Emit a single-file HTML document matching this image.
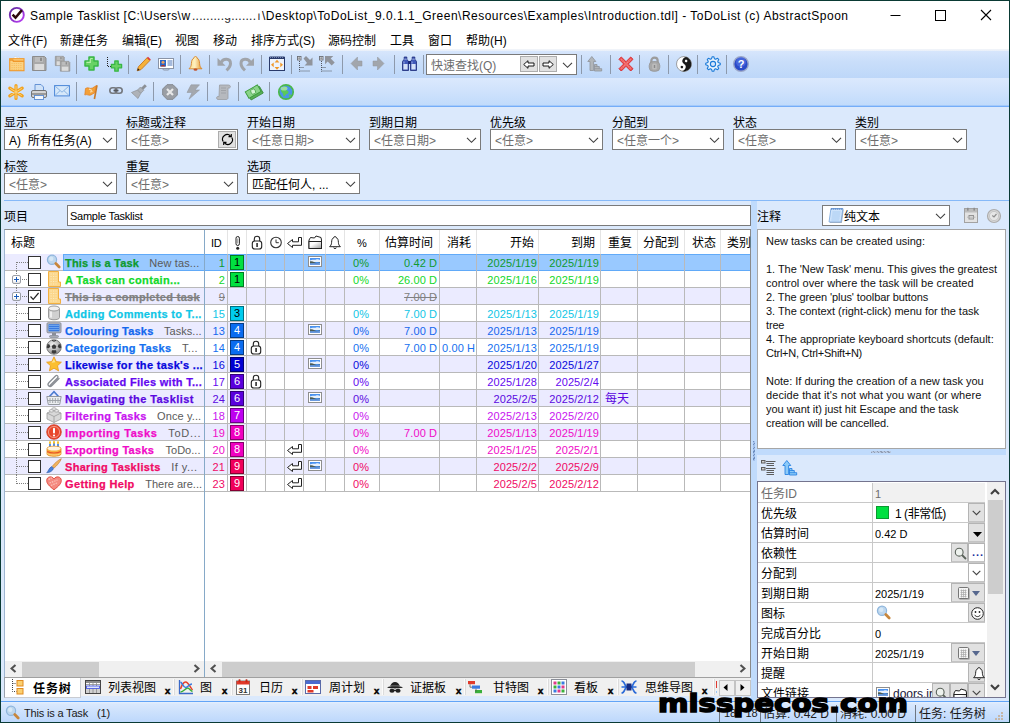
<!DOCTYPE html><html><head><meta charset="utf-8"><title>ToDoList</title><style>
*{box-sizing:border-box;margin:0;padding:0}
html,body{width:1010px;height:723px;overflow:hidden}
body{position:relative;background:#dbe9fc;font:12px "Liberation Sans","Noto Sans CJK SC",sans-serif;color:#000}
.a{position:absolute;white-space:nowrap}
.t{position:absolute;white-space:nowrap;line-height:14px;height:14px}
.cj{font-family:"Liberation Sans","Noto Sans CJK SC",sans-serif;font-size:12px}
.combo{position:absolute;height:21px;border:1px solid #7a7a7a;background:#fff;font-size:12px;line-height:20px;padding-left:4px;padding-top:1px;color:#6d6d6d;white-space:nowrap;overflow:hidden}
.chev{position:absolute;right:3px;top:7px}
.lbl{position:absolute;font-size:12px;line-height:14px;white-space:nowrap}
.sep{position:absolute;width:1px;height:19px;background:#8d99ab}
.ic{position:absolute;width:16px;height:16px}
.row{position:absolute;left:5px;width:745px;height:17px}
.gl{position:absolute;background:#b9b9b9}
.c{position:absolute;top:1px;letter-spacing:.08px;font-size:11px;line-height:17px;height:17px;white-space:nowrap}
.tt{position:absolute;left:60px;top:1px;font:bold 11px/17px "Liberation Sans",sans-serif;white-space:nowrap;letter-spacing:.22px;-webkit-text-stroke:.25px currentColor}
.cm{font-weight:normal;color:#5a5a5a;letter-spacing:0;-webkit-text-stroke:0 transparent}
.cb{position:absolute;left:23px;top:2px;width:13px;height:13px;border:1px solid #333;background:#fff}
.pb{position:absolute;left:225px;top:1px;width:14px;height:15px;border:1px solid #000;font:11px/13px "Liberation Sans",sans-serif;text-align:center}
.dot-h{position:absolute;height:1px;background-image:linear-gradient(to right,#808080 50%,transparent 50%);background-size:2px 1px}
.dot-v{position:absolute;width:1px;background-image:linear-gradient(to bottom,#808080 50%,transparent 50%);background-size:1px 2px}
.hd{position:absolute;top:1px;height:23px;line-height:24px;font-size:12px;white-space:nowrap}
.ar{position:absolute;left:758px;width:227px;height:20px;border-bottom:1px solid #c8c8c8;background:#fff}
.ar .k{position:absolute;left:3px;top:2px;line-height:19px;font-size:12px}
.ar .v{position:absolute;left:117px;top:2px;line-height:19px;font-size:11px}
.ar .vl{position:absolute;left:114px;top:0;width:1px;height:20px;background:#c8c8c8}
.btn{position:absolute;top:0;height:19px;background:#e1e1e1;border:1px solid #b4b4b4;border-bottom-color:#c4c4c4}
.tab{position:absolute;top:679px;height:20px;line-height:19px;font-size:12px;white-space:nowrap}
.x{position:absolute;top:681px;font:bold 9.5px/19px "Liberation Sans",sans-serif;-webkit-text-stroke:.5px #000}
.sb{position:absolute;font-size:11px;line-height:14px;white-space:nowrap;color:#1a1a1a}
</style></head><body>
<div class="a" style="left:0;top:0;width:1010px;height:31px;background:#fff"></div>
<div class="a" style="left:0;top:31px;width:1010px;height:19px;background:#fff"></div>
<div class="a" style="left:8px;top:6px;width:18px;height:18px"><svg width="18" height="18" viewBox="0 0 18 18" style="display:block;overflow:visible"><defs><linearGradient id="apg" x1="0" y1="0" x2="1" y2="1"><stop offset="0" stop-color="#5a2a98"/><stop offset=".5" stop-color="#8a30c8"/><stop offset="1" stop-color="#c040f8"/></linearGradient></defs><circle cx="8.8" cy="8.9" r="7" fill="#fff" stroke="url(#apg)" stroke-width="1.9"/><path d="M4.6 8.700l2.900 3 6.400-7.600" stroke="#2a0a0a" stroke-width="2.500" fill="none"/></svg></div>
<div class="a" style="left:30px;top:8px;font-size:12px;line-height:16px;letter-spacing:0.445px">Sample Tasklist [C:\Users\w</div>
<div class="a" style="left:192px;top:8px;font-size:12px;line-height:16px;letter-spacing:.25px;color:#222">.........<span style="display:inline-block;clip-path:inset(62% 0 0 0);color:#333">g</span>.......<span style="display:inline-block;clip-path:inset(35% 0 0 0);color:#333;margin-left:1px">ı</span></div>
<div class="a" style="left:262px;top:8px;font-size:12px;line-height:16px;letter-spacing:0.493px">\Desktop\ToDoList_9.0.1.1_Green\Resources\Examples\Introduction.tdl] - ToDoList (c) AbstractSpoon</div>
<svg class="a" style="left:880px;top:0" width="130" height="31" viewBox="0 0 130 31"><path d="M10.5 15.5h10" stroke="#000" stroke-width="1" fill="none"/><rect x="55.5" y="10.5" width="10" height="10" stroke="#000" fill="none"/><path d="M101 10l10 10M111 10l-10 10" stroke="#000" stroke-width="1.1" fill="none"/></svg>
<div class="t cj" style="left:8px;top:34px">文件(F)</div>
<div class="t cj" style="left:60px;top:34px">新建任务</div>
<div class="t cj" style="left:122px;top:34px">编辑(E)</div>
<div class="t cj" style="left:175px;top:34px">视图</div>
<div class="t cj" style="left:213px;top:34px">移动</div>
<div class="t cj" style="left:251px;top:34px">排序方式(S)</div>
<div class="t cj" style="left:328px;top:34px">源码控制</div>
<div class="t cj" style="left:390px;top:34px">工具</div>
<div class="t cj" style="left:428px;top:34px">窗口</div>
<div class="t cj" style="left:466px;top:34px">帮助(H)</div>
<div class="a" style="left:0;top:49px;width:1010px;height:2px;background:linear-gradient(#f3f5f9,#e8effa)"></div>
<div class="a" style="left:0;top:51px;width:1010px;height:27px;background:linear-gradient(#d7e6fc,#c9defa 40%,#bdd7f9)"></div>
<div class="a" style="left:0;top:78px;width:1010px;height:27px;background:linear-gradient(#dbe9fd,#cfe2fc 50%,#c1dbfb)"></div>
<div class="a" style="left:0;top:105px;width:1010px;height:1px;background:#a4cafb"></div><div class="a" style="left:0;top:106px;width:1010px;height:1px;background:#74adf8"></div>
<div class="ic" style="left:9px;top:56px"><svg width="16" height="16" viewBox="0 0 16 16" style="display:block;overflow:visible"><path d="M3.800 5.500L5.500.3l2.800 1.200L10 1l2.500 3.500v1z" fill="#fff" stroke="#c4ccd6" stroke-width=".6"/><rect x=".7" y="2.700" width="14.300" height="12" fill="#fbd283" stroke="#f0982a" stroke-width="1.100"/><path d="M.7 4h3l.8 1.300h10.500" stroke="#f0982a" stroke-width="1.600" fill="none"/><path d="M2.500 7.500h11M2.500 9.500h11M2.500 11.500h11M2.500 13.300h11" stroke="#f6bc5a" stroke-width=".9" stroke-dasharray="1.200 1"/></svg></div>
<div class="ic" style="left:32px;top:56px"><svg width="16" height="16" viewBox="0 0 16 16" style="display:block;overflow:visible"><g transform="translate(0,0) scale(1.0)"><path d="M.5.5h12l1.5 1.5v12.5H.5z" fill="#a9a9a9" stroke="#8c8c8c"/><rect x="3" y="1" width="8" height="5" fill="#bcbcbc"/><rect x="8" y="1.7" width="2" height="3.3" fill="#8c8c8c"/><rect x="2.5" y="8" width="9.5" height="6" fill="#dcdcdc"/></g></svg></div>
<div class="ic" style="left:55px;top:56px"><svg width="16" height="16" viewBox="0 0 16 16" style="display:block;overflow:visible"><g transform="translate(0,0) scale(0.66)"><path d="M.5.5h12l1.5 1.5v12.5H.5z" fill="#a9a9a9" stroke="#8c8c8c"/><rect x="3" y="1" width="8" height="5" fill="#bcbcbc"/><rect x="8" y="1.7" width="2" height="3.3" fill="#8c8c8c"/><rect x="2.5" y="8" width="9.5" height="6" fill="#dcdcdc"/></g><g transform="translate(5,5) scale(0.7)"><path d="M.5.5h12l1.5 1.5v12.5H.5z" fill="#a9a9a9" stroke="#8c8c8c"/><rect x="3" y="1" width="8" height="5" fill="#bcbcbc"/><rect x="8" y="1.7" width="2" height="3.3" fill="#8c8c8c"/><rect x="2.5" y="8" width="9.5" height="6" fill="#dcdcdc"/></g></svg></div>
<div class="sep" style="left:76px;top:55px"></div>
<div class="ic" style="left:84px;top:56px"><svg width="15" height="15" viewBox="0 0 15 15" style="display:block;overflow:visible"><path d="M5 1h5v4h4v5h-4v4H5v-4H1V5h4z" fill="#68d264" stroke="#38b646" stroke-width="1.500" stroke-linejoin="round"/><path d="M6.300 2.500h2.400M2.500 6.300h3.800V3" stroke="#b4f0a8" stroke-width="1.200" fill="none"/></svg></div>
<div class="ic" style="left:106px;top:56px"><svg width="16" height="16" viewBox="0 0 16 16" style="display:block;overflow:visible"><path d="M1.500 1v9.500h3.500" stroke="#222" stroke-width="1" stroke-dasharray="1 1" fill="none"/><path d="M8.800 5h3.400v3.400h3.400v3.400h-3.400v3.400H8.800v-3.400H5.400V8.400h3.400z" fill="#68d264" stroke="#38b646" stroke-width="1.300" stroke-linejoin="round"/></svg></div>
<div class="sep" style="left:128px;top:55px"></div>
<div class="ic" style="left:136px;top:56px"><svg width="16" height="16" viewBox="0 0 16 16" style="display:block;overflow:visible"><path d="M1.2 14.8l1.2-4L11 1.8l2.8 2.8-8.8 9z" fill="#f5b13a" stroke="#c8761a" stroke-width=".9"/><path d="M11 1.8l1-1 2.8 2.8-1 1z" fill="#e0303a"/><path d="M1.2 14.8l.7-2.5 1.8 1.8z" fill="#222"/></svg></div>
<div class="ic" style="left:158px;top:56px"><svg width="16" height="16" viewBox="0 0 16 16" style="display:block;overflow:visible"><rect x=".5" y="2.5" width="15" height="10" fill="#fff" stroke="#8a94a6"/><rect x="2" y="4" width="6" height="6.5" fill="#2a66c8"/><circle cx="5" cy="6.3" r="1.5" fill="#e8a060"/><path d="M2.6 10.5c.4-2 4.4-2 4.8 0z" fill="#b03020"/><path d="M9.5 5h5M9.5 7h5M9.5 9h5" stroke="#4a74b8" stroke-width="1"/><path d="M.5 12.5h4l1 1.5h5l1-1.5h4" stroke="#8a94a6" fill="none"/></svg></div>
<div class="sep" style="left:180px;top:55px"></div>
<div class="ic" style="left:188px;top:56px"><svg width="15" height="15" viewBox="0 0 15 15" style="display:block;overflow:visible"><defs><linearGradient id="blg" x1="0" y1="0" x2="1" y2="0"><stop offset="0" stop-color="#fbe08a"/><stop offset=".45" stop-color="#fdf0c0"/><stop offset="1" stop-color="#e8982a"/></linearGradient></defs><path d="M7.500.5c1 0 1.500.7 1.400 1.500 2 .9 2.600 2.900 2.700 5.500.1 2.600.9 3.800 2.400 5.300H1c1.500-1.500 2.300-2.700 2.400-5.300C3.500 4.900 4.100 2.900 6.100 2 6 1.200 6.500.5 7.500.5z" fill="url(#blg)" stroke="#d8862a" stroke-width=".9"/><ellipse cx="7.500" cy="13.600" rx="2" ry="1.200" fill="#c0502a"/></svg></div>
<div class="sep" style="left:209px;top:55px"></div>
<div class="ic" style="left:217px;top:56px"><svg width="16" height="16" viewBox="0 0 16 16" style="display:block;overflow:visible"><path d="M.5 2v7.800h8z" fill="#a0a4aa"/><path d="M4.300 6.300C6 2.300 13.500 2 13.500 7.500c0 2.800-1.800 4.800-4 6.800" stroke="#a0a4aa" stroke-width="3" fill="none"/></svg></div>
<div class="ic" style="left:239px;top:56px"><svg width="16" height="16" viewBox="0 0 16 16" style="display:block;overflow:visible"><g transform="translate(15.500,0) scale(-1,1)"><path d="M.5 2v7.800h8z" fill="#a0a4aa"/><path d="M4.300 6.300C6 2.300 13.500 2 13.500 7.500c0 2.800-1.800 4.800-4 6.800" stroke="#a0a4aa" stroke-width="3" fill="none"/></g></svg></div>
<div class="sep" style="left:261px;top:55px"></div>
<div class="ic" style="left:269px;top:56px"><svg width="16" height="16" viewBox="0 0 16 16" style="display:block;overflow:visible"><rect x=".5" y="1.500" width="15" height="13" fill="#eef4fc" stroke="#2a3a6a"/><rect x=".5" y=".5" width="15" height="2.500" fill="#2a3a6a"/><path d="M1 1.500h14" stroke="#8a9ac8" stroke-width=".8" stroke-dasharray="1 1"/><path d="M8 3.800l2.400 2.700H5.600zM8 13.700l2.400-2.700H5.600zM2 8.800l2.700-2.400v4.800zM14 8.800l-2.700-2.400v4.800z" fill="#f09828"/></svg></div>
<div class="sep" style="left:291px;top:55px"></div>
<div class="ic" style="left:297px;top:56px"><svg width="16" height="16" viewBox="0 0 16 16" style="display:block;overflow:visible"><rect x=".5" y=".5" width="3.500" height="3.500" fill="#fff" stroke="#6a6e76" stroke-width=".9"/><path d="M2.200 1v2.500M1 2.200h2.500" stroke="#6a6e76" stroke-width=".7"/><path d="M2.500 5v10.500M2.500 11.500h4.500M2.500 15h10.500" stroke="#50545c" stroke-width="1" stroke-dasharray="1 1" fill="none"/><path d="M6.500 2.500l2.500-2.500 4 4 2.500-2.500v8h-8l2.500-2.500z" fill="#90949c"/></svg></div>
<div class="ic" style="left:319px;top:56px"><svg width="16" height="16" viewBox="0 0 16 16" style="display:block;overflow:visible"><rect x=".5" y=".5" width="3.500" height="3.500" fill="#fff" stroke="#6a6e76" stroke-width=".9"/><path d="M2.200 1v2.500M1 2.200h2.500" stroke="#6a6e76" stroke-width=".7"/><path d="M2.500 5v10.500M2.500 11.500h4.500M2.500 15h10.500" stroke="#50545c" stroke-width="1" stroke-dasharray="1 1" fill="none"/><path d="M6 0h8.300l-2.600 2.600 4 4-3 3-4-4L6 8.300z" fill="#90949c"/></svg></div>
<div class="sep" style="left:342px;top:55px"></div>
<div class="ic" style="left:349px;top:56px"><svg width="16" height="16" viewBox="0 0 16 16" style="display:block;overflow:visible"><path d="M2 7.500l6.500-6.500v4h4.500v5H8.500v4z" fill="#a2a6ac" stroke="#92969c" stroke-width=".5"/></svg></div>
<div class="ic" style="left:371px;top:56px"><svg width="16" height="16" viewBox="0 0 16 16" style="display:block;overflow:visible"><g transform="translate(15,0) scale(-1,1)"><path d="M2 7.500l6.500-6.500v4h4.500v5H8.500v4z" fill="#a2a6ac" stroke="#92969c" stroke-width=".5"/></g></svg></div>
<div class="sep" style="left:394px;top:55px"></div>
<div class="ic" style="left:402px;top:56px"><svg width="15" height="15" viewBox="0 0 15 15" style="display:block;overflow:visible"><path d="M2.200 1h2.600v2.200l1.700 2.300v9H.5v-9l1.700-2.300z" fill="#4058b8" stroke="#1a2878" stroke-width=".8"/><rect x="1.400" y="8" width="4.200" height="5.500" fill="#d4e0f6"/><path d="M2.200 3.200h2.600" stroke="#a8b8e8" stroke-width=".9"/><path d="M2 5.500v2" stroke="#a8b8e8" stroke-width=".9"/><g transform="translate(8,0)"><path d="M2.200 1h2.600v2.200l1.700 2.300v9H.5v-9l1.700-2.300z" fill="#4058b8" stroke="#1a2878" stroke-width=".8"/><rect x="1.400" y="8" width="4.200" height="5.500" fill="#d4e0f6"/><path d="M2.200 3.200h2.600" stroke="#a8b8e8" stroke-width=".9"/><path d="M2 5.500v2" stroke="#a8b8e8" stroke-width=".9"/></g><rect x="6" y="5" width="3" height="3" fill="#1a2878"/></svg></div>
<div class="sep" style="left:423px;top:55px"></div>
<div class="sep" style="left:581px;top:55px"></div>
<div class="ic" style="left:587px;top:56px"><svg width="16" height="16" viewBox="0 0 16 16" style="display:block;overflow:visible"><path d="M4.800.5L.8 5.500h2.200v9h3.600v-9h2.200z" fill="#b2b6ba" stroke="#8e9298" stroke-width=".8" stroke-linejoin="round"/><path d="M7.500 8.500h2.500v2h2.300v2.200h2.400v2.300H7.500z" fill="#b2b6ba" stroke="#8e9298" stroke-width=".8"/><path d="M7.500 10.500h2.500M7.500 12.700h4.800" stroke="#8e9298" stroke-width=".7"/></svg></div>
<div class="sep" style="left:610px;top:55px"></div>
<div class="ic" style="left:618px;top:56px"><svg width="16" height="16" viewBox="0 0 16 16" style="display:block;overflow:visible"><path d="M1 3.300L3.300 1 8 5.700 12.700 1 15 3.300 10.300 8l4.700 4.700-2.300 2.300L8 10.300 3.300 15 1 12.700 5.700 8z" fill="#ee5a5a" stroke="#d82a30" stroke-width="1" stroke-linejoin="round"/><path d="M3.300 3.300l9.400 9.400M12.700 3.300l-9.400 9.400" stroke="#f48a8a" stroke-width="1.200" stroke-dasharray="1 1"/></svg></div>
<div class="sep" style="left:639px;top:55px"></div>
<div class="ic" style="left:647px;top:56px"><svg width="15" height="16" viewBox="0 0 15 16" style="display:block;overflow:visible"><path d="M4.300 7V5c0-4.500 6.400-4.500 6.400 0v2" stroke="#9c9c9c" stroke-width="2.200" fill="none"/><rect x="2.200" y="5.500" width="10.600" height="9.800" rx="4" fill="#a8a8a8" stroke="#949494" stroke-width=".8"/><rect x="5.200" y="7.500" width="4.600" height="6" rx="1.500" fill="#bcbcbc"/><path d="M7.500 9v3" stroke="#8a8a8a" stroke-width="1.400"/></svg></div>
<div class="sep" style="left:668px;top:55px"></div>
<div class="ic" style="left:676px;top:56px"><svg width="16" height="16" viewBox="0 0 16 16" style="display:block;overflow:visible"><circle cx="8" cy="8" r="7.500" fill="#fff" stroke="#8a8a8a" stroke-width=".8"/><g transform="rotate(35 8 8) translate(0,16) scale(1,-1)"><path d="M8 .6a7.400 7.400 0 0 1 0 14.800a3.700 3.700 0 0 1 0-7.400a3.700 3.700 0 0 0 0-7.400z" fill="#1a1a1a"/><circle cx="8" cy="4.300" r="1.300" fill="#1a1a1a"/><circle cx="8" cy="11.700" r="1.300" fill="#fff"/></g></svg></div>
<div class="sep" style="left:697px;top:55px"></div>
<div class="ic" style="left:705px;top:56px"><svg width="16" height="16" viewBox="0 0 16 16" style="display:block;overflow:visible"><path d="M15.26 7.20 L15.26 8.80 L13.19 9.51 L12.73 10.60 L13.70 12.56 L12.56 13.70 L10.60 12.73 L9.51 13.19 L8.80 15.26 L7.20 15.26 L6.49 13.19 L5.40 12.73 L3.44 13.70 L2.30 12.56 L3.27 10.60 L2.81 9.51 L0.74 8.80 L0.74 7.20 L2.81 6.49 L3.27 5.40 L2.30 3.44 L3.44 2.30 L5.40 3.27 L6.49 2.81 L7.20 0.74 L8.80 0.74 L9.51 2.81 L10.60 3.27 L12.56 2.30 L13.70 3.44 L12.73 5.40 L13.19 6.49z" fill="#e8f2fc" stroke="#1a7ad8" stroke-width="1.100" stroke-linejoin="round"/><circle cx="8" cy="8" r="2.600" fill="#d6e6fb" stroke="#1a7ad8" stroke-width="1.100"/></svg></div>
<div class="sep" style="left:726px;top:55px"></div>
<div class="ic" style="left:733px;top:56px"><svg width="16" height="16" viewBox="0 0 16 16" style="display:block;overflow:visible"><circle cx="8" cy="8" r="7.300" fill="#2a4ac8" stroke="#9aa6c8" stroke-width="1.400"/><circle cx="8" cy="6" r="5" fill="#5a7ae8" opacity=".6"/><text x="8" y="12" text-anchor="middle" font-family="Liberation Sans,sans-serif" font-weight="bold" font-size="11" fill="#fff">?</text></svg></div>
<div class="ic" style="left:8px;top:84px"><svg width="16" height="16" viewBox="0 0 16 16" style="display:block;overflow:visible"><g stroke="#f2a21e" stroke-width="3.200" stroke-linecap="round"><path d="M8 1.600v12.800M1.800 4.200l12.400 7.600M14.200 4.200L1.800 11.800"/></g><g stroke="#fbd27a" stroke-width="1" stroke-linecap="round"><path d="M8 2v12M2.500 4.600l11 6.800M13.500 4.600l-11 6.800"/></g></svg></div>
<div class="ic" style="left:31px;top:84px"><svg width="16" height="16" viewBox="0 0 16 16" style="display:block;overflow:visible"><path d="M4 7V.5h6l2.500 2.500V7z" fill="#cfe2f8" stroke="#5a8ad0" stroke-width=".9"/><rect x=".5" y="6.500" width="15" height="7" rx="1.500" fill="#d4d4d4" stroke="#6a6a6a" stroke-width=".9"/><rect x="1" y="9" width="14" height="2" fill="#9a9a9a"/><rect x="3.500" y="11.500" width="9" height="4" fill="#f4f8fc" stroke="#5a8ad0" stroke-width=".9"/></svg></div>
<div class="ic" style="left:54px;top:84px"><svg width="16" height="16" viewBox="0 0 16 16" style="display:block;overflow:visible"><rect x=".6" y="1.600" width="14.800" height="10.300" fill="#d6e8fa" stroke="#4a86d8" stroke-width="1"/><path d="M1.200 2.200L8 8.200l6.800-6M1.200 11.300l4.800-4.600M14.800 11.300l-4.800-4.600" stroke="#8ab4e4" stroke-width="1" fill="none"/></svg></div>
<div class="sep" style="left:76px;top:82px"></div>
<div class="ic" style="left:84px;top:84px"><svg width="16" height="16" viewBox="0 0 16 16" style="display:block;overflow:visible"><path d="M12.200 1l1.600.4-2.600 13.800-1.600-.4z" fill="#c87a2a"/><path d="M1.500 4.500c2.500-2 4.500 1 7-.5 1.500-.9 2.500-1.800 3.700-2.200l-1.400 7c-1.500.5-2.300 1.500-4 2.200-2.300.9-3.800-1.200-6 0z" fill="#f4a038" stroke="#e07a1a" stroke-width=".7"/><path d="M5 5l3 1.500M6 8l2.500-.5" stroke="#fde0b0" stroke-width="1.200"/></svg></div>
<div class="ic" style="left:108px;top:84px"><svg width="16" height="16" viewBox="0 0 16 16" style="display:block;overflow:visible"><rect x="1.800" y="3.800" width="7" height="5.400" rx="2.700" fill="none" stroke="#74787e" stroke-width="1.600"/><rect x="7.200" y="3.800" width="7" height="5.400" rx="2.700" fill="none" stroke="#74787e" stroke-width="1.600"/><path d="M5.500 6.500h5" stroke="#54585e" stroke-width="1.600"/></svg></div>
<div class="ic" style="left:131px;top:84px"><svg width="16" height="16" viewBox="0 0 16 16" style="display:block;overflow:visible"><path d="M9.500 4.500L13.800.3l2 2-4.300 4.200z" fill="#8c9096"/><path d="M.5 8.500l6-2.500 3-3 3.300 3.300-3 3L7 14.500z" fill="#aeb2b8" stroke="#8c9096" stroke-width=".7"/><path d="M6.500 6l3.300 3.300" stroke="#8c9096" stroke-width=".8"/></svg></div>
<div class="sep" style="left:153px;top:82px"></div>
<div class="ic" style="left:162px;top:84px"><svg width="16" height="16" viewBox="0 0 16 16" style="display:block;overflow:visible"><path d="M5 .7h6L15.300 5v6L11 15.300H5L.7 11V5z" fill="#9a9ea4" stroke="#84888e"/><path d="M5 5l6 6M11 5l-6 6" stroke="#e8e8e8" stroke-width="2.200"/></svg></div>
<div class="ic" style="left:185px;top:84px"><svg width="16" height="16" viewBox="0 0 16 16" style="display:block;overflow:visible"><path d="M6 .8h8.500L10 6h4.500L4 15.200 7 8.500H2z" fill="#a4a8ae" stroke="#8e9298" stroke-width=".5"/></svg></div>
<div class="sep" style="left:207px;top:82px"></div>
<div class="ic" style="left:216px;top:84px"><svg width="16" height="16" viewBox="0 0 16 16" style="display:block;overflow:visible"><path d="M3.500 1h9c2 0 2.500 2.500 1 3h-1.500v10c0 1-1 1.500-2 1.500H2c-1.500 0-2-2.500-.5-3h1.500z" fill="#b6b9be" stroke="#9a9da2" stroke-width=".8"/><path d="M5 4h5M5 6.500h5M5 9h5" stroke="#9a9da2" stroke-width=".8"/></svg></div>
<div class="sep" style="left:238px;top:82px"></div>
<div class="ic" style="left:246px;top:84px"><svg width="16" height="16" viewBox="0 0 16 16" style="display:block;overflow:visible"><g transform="rotate(-30 8 8)"><rect x="1.500" y="6" width="14" height="7.500" fill="#58b058" stroke="#3a8a3a" stroke-width=".8"/><rect x=".5" y="3.500" width="14" height="7.500" fill="#8ad48a" stroke="#3a9a3a" stroke-width=".9"/><ellipse cx="7.500" cy="7.200" rx="2.400" ry="2.600" fill="#d4f4d4" stroke="#3a9a3a" stroke-width=".7"/></g></svg></div>
<div class="sep" style="left:269px;top:82px"></div>
<div class="ic" style="left:278px;top:84px"><svg width="16" height="16" viewBox="0 0 16 16" style="display:block;overflow:visible"><circle cx="8" cy="8" r="7.200" fill="#4a94e8" stroke="#4ab84a" stroke-width="1.700"/><path d="M4 4c1.500-1.500 4-2 5-1s-1 2-.5 3 2 .5 2 2-1.500 2-2.500 2.500S7 13 6 12.500 5.500 10 4.500 9 2.500 7 3 6s.5-1.500 1-2z" fill="#5ac85a"/><path d="M11 10.500c1-.5 2 0 2 1s-1.500 1.500-2 1 0-1.500 0-2z" fill="#5ac85a"/><ellipse cx="6" cy="4.500" rx="3.500" ry="2" fill="#fff" opacity=".4"/></svg></div>
<div class="combo" style="left:426px;top:54px;width:151px;color:#6d6d6d">快速查找(Q)<svg class="chev" width="11" height="7" viewBox="0 0 11 7"><path d="M1 .8l4.500 4.500L10 .8" stroke="#404040" stroke-width="1.150" fill="none"/></svg><span class="a" style="left:93px;top:1px;width:18px;height:16px;background:#e1e1e1;border:1px solid #adadad"></span><span class="a" style="left:112px;top:1px;width:18px;height:16px;background:#e1e1e1;border:1px solid #adadad"></span><svg class="a" style="left:96px;top:5px" width="12" height="9" viewBox="0 0 12 9"><path d="M.7 4.5L5 .7v2.3h6v3H5v2.3z" fill="#fff" stroke="#000" stroke-width=".9"/></svg><svg class="a" style="left:115px;top:5px" width="12" height="9" viewBox="0 0 12 9"><path d="M11.3 4.5L7 .7v2.3H1v3h6v2.3z" fill="#fff" stroke="#000" stroke-width=".9"/></svg></div>
<div class="lbl" style="left:4px;top:116px">显示</div>
<div class="combo" style="left:4px;top:129px;width:113px;color:#000;">A)&nbsp; 所有任务(A)<svg class="chev" width="11" height="7" viewBox="0 0 11 7"><path d="M1 .8l4.500 4.500L10 .8" stroke="#404040" stroke-width="1.150" fill="none"/></svg></div>
<div class="lbl" style="left:126px;top:116px">标题或注释</div>
<div class="combo" style="left:126px;top:129px;width:112px">&lt;任意&gt;<span class="a" style="right:1px;top:1px;width:18px;height:17px;background:#e1e1e1;border:1px solid #adadad"></span><svg class="a" style="right:3px;top:3px" width="13" height="13" viewBox="0 0 13 13"><path d="M2.2 8.5A4.6 4.6 0 0 1 9.5 3M10.8 4.5A4.6 4.6 0 0 1 3.5 10" stroke="#000" stroke-width="1.1" fill="none"/><path d="M7.5 3.6h2.8V.9M5.5 9.4H2.7v2.7" stroke="#000" stroke-width="1.1" fill="none"/></svg></div>
<div class="lbl" style="left:247px;top:116px">开始日期</div>
<div class="combo" style="left:247px;top:129px;width:113px;">&lt;任意日期&gt;<svg class="chev" width="11" height="7" viewBox="0 0 11 7"><path d="M1 .8l4.500 4.500L10 .8" stroke="#404040" stroke-width="1.150" fill="none"/></svg></div>
<div class="lbl" style="left:369px;top:116px">到期日期</div>
<div class="combo" style="left:369px;top:129px;width:112px;">&lt;任意日期&gt;<svg class="chev" width="11" height="7" viewBox="0 0 11 7"><path d="M1 .8l4.500 4.500L10 .8" stroke="#404040" stroke-width="1.150" fill="none"/></svg></div>
<div class="lbl" style="left:490px;top:116px">优先级</div>
<div class="combo" style="left:490px;top:129px;width:113px;">&lt;任意&gt;<svg class="chev" width="11" height="7" viewBox="0 0 11 7"><path d="M1 .8l4.500 4.500L10 .8" stroke="#404040" stroke-width="1.150" fill="none"/></svg></div>
<div class="lbl" style="left:612px;top:116px">分配到</div>
<div class="combo" style="left:612px;top:129px;width:112px;">&lt;任意一个&gt;<svg class="chev" width="11" height="7" viewBox="0 0 11 7"><path d="M1 .8l4.500 4.500L10 .8" stroke="#404040" stroke-width="1.150" fill="none"/></svg></div>
<div class="lbl" style="left:733px;top:116px">状态</div>
<div class="combo" style="left:733px;top:129px;width:113px;">&lt;任意&gt;<svg class="chev" width="11" height="7" viewBox="0 0 11 7"><path d="M1 .8l4.500 4.500L10 .8" stroke="#404040" stroke-width="1.150" fill="none"/></svg></div>
<div class="lbl" style="left:855px;top:116px">类别</div>
<div class="combo" style="left:855px;top:129px;width:112px;">&lt;任意&gt;<svg class="chev" width="11" height="7" viewBox="0 0 11 7"><path d="M1 .8l4.500 4.500L10 .8" stroke="#404040" stroke-width="1.150" fill="none"/></svg></div>
<div class="lbl" style="left:4px;top:160px">标签</div>
<div class="combo" style="left:4px;top:173px;width:113px;">&lt;任意&gt;<svg class="chev" width="11" height="7" viewBox="0 0 11 7"><path d="M1 .8l4.500 4.500L10 .8" stroke="#404040" stroke-width="1.150" fill="none"/></svg></div>
<div class="lbl" style="left:126px;top:160px">重复</div>
<div class="combo" style="left:126px;top:173px;width:112px;">&lt;任意&gt;<svg class="chev" width="11" height="7" viewBox="0 0 11 7"><path d="M1 .8l4.500 4.500L10 .8" stroke="#404040" stroke-width="1.150" fill="none"/></svg></div>
<div class="lbl" style="left:247px;top:160px">选项</div>
<div class="combo" style="left:247px;top:173px;width:113px;color:#000;">匹配任何人, ...<svg class="chev" width="11" height="7" viewBox="0 0 11 7"><path d="M1 .8l4.500 4.500L10 .8" stroke="#404040" stroke-width="1.150" fill="none"/></svg></div>
<div class="a" style="left:4px;top:200px;width:1006px;height:1px;background:#86b9f8"></div>
<div class="lbl" style="left:4px;top:210px">项目</div>
<div class="a" style="left:67px;top:205px;width:684px;height:21px;border:1px solid #7a7a7a;background:#fff;font-size:11px;line-height:20px;padding-left:2px;letter-spacing:-0.248px">Sample Tasklist</div>
<div class="lbl" style="left:757px;top:210px">注释</div>
<div class="combo" style="left:822px;top:205px;width:128px;color:#000;padding-left:21px">纯文本<svg class="chev" width="11" height="7" viewBox="0 0 11 7"><path d="M1 .8l4.500 4.500L10 .8" stroke="#404040" stroke-width="1.150" fill="none"/></svg><span class="a" style="left:5px;top:2px;width:16px;height:16px"><svg width="16" height="16" viewBox="0 0 16 16" style="display:block;overflow:visible"><g transform="skewX(-8) translate(2.500,0)"><rect x="1.500" y="1.500" width="12" height="13.500" fill="#aeb4be"/><rect x=".5" y=".5" width="12" height="13.500" fill="#cfe4fb" stroke="#7aa6dc" stroke-width=".8"/><path d="M2.500 4h8M2.500 6h8M2.500 8h8M2.500 10h8M2.500 12h8" stroke="#9cc2ee" stroke-width=".7"/><path d="M1 1h11" stroke="#3a6ab8" stroke-width="1.400" stroke-dasharray="1 1"/></g></svg></span></div>
<div class="ic" style="left:963px;top:207px"><svg width="16" height="16" viewBox="0 0 16 16" style="display:block;overflow:visible"><rect x="1.500" y="1.500" width="13" height="14" fill="#e2e2e2" stroke="#a2a2a2"/><rect x="2" y="2" width="12" height="3.500" fill="#bcbcbc"/><rect x="4" y=".8" width="1.600" height="2.800" fill="#8e8e8e"/><rect x="10.400" y=".8" width="1.600" height="2.800" fill="#8e8e8e"/><rect x="6" y="8.500" width="4.500" height="3.500" fill="none" stroke="#8a8a8a" stroke-width=".9"/><path d="M4 10.200h8.500" stroke="#b0b0b0" stroke-width=".8"/></svg></div>
<div class="ic" style="left:986px;top:207px"><svg width="16" height="16" viewBox="0 0 16 16" style="display:block;overflow:visible"><circle cx="8" cy="9" r="6.500" fill="#d8d8d8" stroke="#acacac" stroke-width="1.200"/><circle cx="8" cy="9" r="4.600" fill="#e6e6e6" stroke="#bcbcbc" stroke-width=".7"/><path d="M6.300 8.500l1.700 1.500 2.500-3" stroke="#8e8e8e" stroke-width="1.200" fill="none"/></svg></div>
<div class="a" style="left:4px;top:229px;width:747px;height:449px;background:#fff;border:1px solid #8a8a8a;border-left-color:#9fb6d2;border-bottom:none"></div>
<div class="a" style="left:751px;top:201px;width:6px;height:500px;background:#c0dbfc"></div><div class="a" style="left:757px;top:449px;width:249px;height:6px;background:#c0dbfc"></div>
<div class="a" style="left:753px;top:441px;width:2px;height:20px;background:repeating-linear-gradient(135deg,#6f8fc0 0,#6f8fc0 1px,#a4c0ea 1px,#a4c0ea 2.500px)"></div>
<div class="a" style="left:5px;top:230px;width:745px;height:24px;background:#fff">
<div class="hd" style="left:6px">标题</div>
<div class="hd" style="left:206px;font-size:11px;letter-spacing:-.3px">ID</div>
<div class="a" style="left:225px;top:5px;width:16px;height:16px"><svg width="16" height="16" viewBox="0 0 16 16" style="display:block;overflow:visible"><rect x="6" y="1.500" width="3.400" height="9" rx="1.700" fill="#fff" stroke="#222" stroke-width="1"/><circle cx="7.700" cy="13.300" r="1.500" fill="#222"/><path d="M7.700 3.500v5" stroke="#999" stroke-width="1"/></svg></div>
<div class="a" style="left:244px;top:4px;width:16px;height:16px"><svg width="16" height="16" viewBox="0 0 16 16" style="display:block;overflow:visible"><path d="M5.300 7.500V5c0-3.600 5.400-3.600 5.400 0v2.500" stroke="#222" stroke-width="1.100" fill="none"/><rect x="3.300" y="7" width="9.400" height="8" rx="2.600" fill="#fff" stroke="#222" stroke-width="1.100"/><rect x="7.200" y="9" width="1.800" height="4" fill="#444"/></svg></div>
<div class="a" style="left:263px;top:4px;width:16px;height:16px"><svg width="16" height="16" viewBox="0 0 16 16" style="display:block;overflow:visible"><circle cx="8" cy="8.500" r="5.300" fill="#fff" stroke="#333" stroke-width="1.100"/><path d="M8 5.500v3.200h2.800" stroke="#333" stroke-width="1" fill="none"/></svg></div>
<div class="a" style="left:281px;top:4px;width:18px;height:16px"><svg width="18" height="16" viewBox="0 0 18 16" style="display:block;overflow:visible"><path d="M1.500 9.500l5-4v2.300h6V3.500h3v7.800h-9v2.200z" fill="#fff" stroke="#222" stroke-width="1" stroke-linejoin="round"/></svg></div>
<div class="a" style="left:302px;top:4px;width:16px;height:16px"><svg width="16" height="16" viewBox="0 0 16 16" style="display:block;overflow:visible"><defs><linearGradient id="hfg" x1="0" y1="0" x2="1" y2="1"><stop offset=".35" stop-color="#fff"/><stop offset="1" stop-color="#9a9a9a"/></linearGradient></defs><path d="M2 14.500V6l1.500-2.500 4 .5 1.500-2 5 1.500.5 2.500v8.500z" fill="#fff" stroke="#222" stroke-width="1"/><rect x="2" y="7.500" width="12.500" height="7" fill="url(#hfg)" stroke="#222" stroke-width="1"/></svg></div>
<div class="a" style="left:322px;top:5px;width:16px;height:16px"><svg width="16" height="16" viewBox="0 0 16 16" style="display:block;overflow:visible"><path d="M8 1.500c.7 0 1 .4 1 1 2 .8 2.300 2.600 2.400 4.800.1 2.200.8 3.400 2 4.400H2.600c1.200-1 1.900-2.200 2-4.400C4.700 5.100 5 3.300 7 2.500c0-.6.300-1 1-1z" fill="#fff" stroke="#222" stroke-width="1"/><path d="M6.800 12.500c0 1.600 2.400 1.600 2.400 0" stroke="#222" fill="none"/></svg></div>
<div class="hd" style="left:352px;font-size:11px">%</div>
<div class="hd" style="left:380px">估算时间</div>
<div class="hd" style="left:442px">消耗</div>
<div class="hd" style="left:505px">开始</div>
<div class="hd" style="left:566px">到期</div>
<div class="hd" style="left:603px">重复</div>
<div class="hd" style="left:638px">分配到</div>
<div class="hd" style="left:687px">状态</div>
<div class="hd" style="left:722px">类别</div>
<div class="a" style="left:222px;top:0;width:1px;height:24px;background:#e4e4e4"></div>
<div class="a" style="left:241px;top:0;width:1px;height:24px;background:#e4e4e4"></div>
<div class="a" style="left:260px;top:0;width:1px;height:24px;background:#e4e4e4"></div>
<div class="a" style="left:279px;top:0;width:1px;height:24px;background:#e4e4e4"></div>
<div class="a" style="left:298px;top:0;width:1px;height:24px;background:#e4e4e4"></div>
<div class="a" style="left:320px;top:0;width:1px;height:24px;background:#e4e4e4"></div>
<div class="a" style="left:339px;top:0;width:1px;height:24px;background:#e4e4e4"></div>
<div class="a" style="left:374px;top:0;width:1px;height:24px;background:#e4e4e4"></div>
<div class="a" style="left:434px;top:0;width:1px;height:24px;background:#e4e4e4"></div>
<div class="a" style="left:471px;top:0;width:1px;height:24px;background:#e4e4e4"></div>
<div class="a" style="left:533px;top:0;width:1px;height:24px;background:#e4e4e4"></div>
<div class="a" style="left:595px;top:0;width:1px;height:24px;background:#e4e4e4"></div>
<div class="a" style="left:632px;top:0;width:1px;height:24px;background:#e4e4e4"></div>
<div class="a" style="left:679px;top:0;width:1px;height:24px;background:#e4e4e4"></div>
<div class="a" style="left:715px;top:0;width:1px;height:24px;background:#e4e4e4"></div>
</div>
<div class="row" style="top:254px;background:#ebebff">
<div class="a" style="left:58px;top:0;width:687px;height:17px;background:#99c9ff;border-top:1px solid #61aaf8;border-bottom:1px solid #61aaf8"></div>
<div class="a" style="left:58px;top:0;width:1px;height:17px;background:#61aaf8"></div>
<div class="gl" style="left:0;top:16px;width:58px;height:1px"></div>
<div class="gl" style="left:222px;top:0;width:1px;height:17px"></div>
<div class="gl" style="left:241px;top:0;width:1px;height:17px"></div>
<div class="gl" style="left:260px;top:0;width:1px;height:17px"></div>
<div class="gl" style="left:279px;top:0;width:1px;height:17px"></div>
<div class="gl" style="left:298px;top:0;width:1px;height:17px"></div>
<div class="gl" style="left:320px;top:0;width:1px;height:17px"></div>
<div class="gl" style="left:339px;top:0;width:1px;height:17px"></div>
<div class="gl" style="left:374px;top:0;width:1px;height:17px"></div>
<div class="gl" style="left:434px;top:0;width:1px;height:17px"></div>
<div class="gl" style="left:471px;top:0;width:1px;height:17px"></div>
<div class="gl" style="left:533px;top:0;width:1px;height:17px"></div>
<div class="gl" style="left:595px;top:0;width:1px;height:17px"></div>
<div class="gl" style="left:632px;top:0;width:1px;height:17px"></div>
<div class="gl" style="left:679px;top:0;width:1px;height:17px"></div>
<div class="gl" style="left:715px;top:0;width:1px;height:17px"></div>
<div class="dot-h" style="left:12px;top:8px;width:11px"></div>
<div class="dot-v" style="left:11px;top:8px;height:9px"></div>
<div class="cb"></div>
<div class="a" style="left:41px;top:0;width:16px;height:16px"><svg width="16" height="16" viewBox="0 0 16 16" style="display:block;overflow:visible"><circle cx="6" cy="5.800" r="4.600" fill="#bcd6ee" stroke="#8fb6dc" stroke-width="1.200"/><circle cx="5.200" cy="4.800" r="2.200" fill="#dcecf8" opacity=".8"/><path d="M9.800 9.600l3.400 3.400" stroke="#c8863c" stroke-width="2.800" stroke-linecap="round"/></svg></div>
<div class="tt" style="color:#0e9a2e;letter-spacing:0.198px">This is a Task<span class="cm a" style="left:84.3px;top:0;letter-spacing:0.109px">New tas...</span></div>
<div class="c" style="right:525px;color:#0e9a2e;">1</div>
<div class="pb" style="background:#00e040;color:#000;border-color:#007b23">1</div>
<div class="a" style="left:303px;top:2px;width:14px;height:11px"><svg width="14" height="11" viewBox="0 0 14 11" style="display:block;overflow:visible"><rect x=".5" y=".5" width="13" height="10" fill="#fff" stroke="#8e8e8e"/><rect x="2" y="2" width="10" height="7" fill="#4a92f0"/><path d="M2 4.500c2-1.500 4-.5 5.500-.8S10.500 3 12 4v2H2z" fill="#e8f0fa"/><path d="M2 7.500V5.300c1.500-.5 3 .2 4.500 1s3 .7 5.500.2v1z" fill="#4a5a52"/><path d="M2 9V7.500c3-.5 6 .5 10-.5v2z" fill="#6a9ae0"/></svg></div>
<div class="c" style="left:348px;color:#0e9a2e">0%</div>
<div class="c" style="right:313px;color:#0e9a2e;">0.42 D</div>
<div class="c" style="right:213px;color:#0e9a2e">2025/1/19</div>
<div class="c" style="right:151px;color:#0e9a2e">2025/1/19</div>
</div>
<div class="row" style="top:271px;background:#fff">
<div class="gl" style="left:0;top:16px;width:745px;height:1px"></div>
<div class="gl" style="left:222px;top:0;width:1px;height:17px"></div>
<div class="gl" style="left:241px;top:0;width:1px;height:17px"></div>
<div class="gl" style="left:260px;top:0;width:1px;height:17px"></div>
<div class="gl" style="left:279px;top:0;width:1px;height:17px"></div>
<div class="gl" style="left:298px;top:0;width:1px;height:17px"></div>
<div class="gl" style="left:320px;top:0;width:1px;height:17px"></div>
<div class="gl" style="left:339px;top:0;width:1px;height:17px"></div>
<div class="gl" style="left:374px;top:0;width:1px;height:17px"></div>
<div class="gl" style="left:434px;top:0;width:1px;height:17px"></div>
<div class="gl" style="left:471px;top:0;width:1px;height:17px"></div>
<div class="gl" style="left:533px;top:0;width:1px;height:17px"></div>
<div class="gl" style="left:595px;top:0;width:1px;height:17px"></div>
<div class="gl" style="left:632px;top:0;width:1px;height:17px"></div>
<div class="gl" style="left:679px;top:0;width:1px;height:17px"></div>
<div class="gl" style="left:715px;top:0;width:1px;height:17px"></div>
<div class="a" style="left:7px;top:4px;width:9px;height:9px;border:1px solid #9a9ea6;border-radius:2px;background:linear-gradient(#fff 60%,#e4e4e4)"></div><div class="a" style="left:9px;top:8px;width:5px;height:1px;background:#1a5ab8"></div><div class="a" style="left:11px;top:6px;width:1px;height:5px;background:#1a5ab8"></div>
<div class="dot-h" style="left:17px;top:8px;width:6px"></div>
<div class="dot-v" style="left:11px;top:0;height:4px"></div>
<div class="dot-v" style="left:11px;top:14px;height:3px"></div>
<div class="cb"></div>
<div class="a" style="left:41px;top:0;width:16px;height:16px"><svg width="16" height="16" viewBox="0 0 16 16" style="display:block;overflow:visible"><path d="M2.500.5h10v10.500h2v4.500h-12z" fill="#fbd78c" stroke="#f2b040" stroke-width="1"/><path d="M4.500 3h6M4.500 5.500h6M4.500 8h6M4.500 10.500h6M4.500 13h6" stroke="#fdeabc" stroke-width="1.200" stroke-dasharray="1.200 1.300"/></svg></div>
<div class="tt" style="color:#12d82a;letter-spacing:0.333px">A Task can contain...</div>
<div class="c" style="right:525px;color:#12d82a;">2</div>
<div class="pb" style="background:#00e040;color:#000;border-color:#007b23">1</div>
<div class="c" style="left:348px;color:#12d82a">0%</div>
<div class="c" style="right:313px;color:#12d82a;">26.00 D</div>
<div class="c" style="right:213px;color:#12d82a">2025/1/16</div>
<div class="c" style="right:151px;color:#12d82a">2025/1/19</div>
</div>
<div class="row" style="top:288px;background:#ebebff">
<div class="gl" style="left:0;top:16px;width:745px;height:1px"></div>
<div class="gl" style="left:222px;top:0;width:1px;height:17px"></div>
<div class="gl" style="left:241px;top:0;width:1px;height:17px"></div>
<div class="gl" style="left:260px;top:0;width:1px;height:17px"></div>
<div class="gl" style="left:279px;top:0;width:1px;height:17px"></div>
<div class="gl" style="left:298px;top:0;width:1px;height:17px"></div>
<div class="gl" style="left:320px;top:0;width:1px;height:17px"></div>
<div class="gl" style="left:339px;top:0;width:1px;height:17px"></div>
<div class="gl" style="left:374px;top:0;width:1px;height:17px"></div>
<div class="gl" style="left:434px;top:0;width:1px;height:17px"></div>
<div class="gl" style="left:471px;top:0;width:1px;height:17px"></div>
<div class="gl" style="left:533px;top:0;width:1px;height:17px"></div>
<div class="gl" style="left:595px;top:0;width:1px;height:17px"></div>
<div class="gl" style="left:632px;top:0;width:1px;height:17px"></div>
<div class="gl" style="left:679px;top:0;width:1px;height:17px"></div>
<div class="gl" style="left:715px;top:0;width:1px;height:17px"></div>
<div class="a" style="left:7px;top:4px;width:9px;height:9px;border:1px solid #9a9ea6;border-radius:2px;background:linear-gradient(#fff 60%,#e4e4e4)"></div><div class="a" style="left:9px;top:8px;width:5px;height:1px;background:#1a5ab8"></div><div class="a" style="left:11px;top:6px;width:1px;height:5px;background:#1a5ab8"></div>
<div class="dot-h" style="left:17px;top:8px;width:6px"></div>
<div class="dot-v" style="left:11px;top:0;height:4px"></div>
<div class="dot-v" style="left:11px;top:14px;height:3px"></div>
<div class="cb"><svg width="11" height="11" viewBox="0 0 11 11" style="display:block"><path d="M1.5 5.5l2.7 2.8L9.6 2" stroke="#222" stroke-width="1.2" fill="none"/></svg></div>
<div class="a" style="left:41px;top:0;width:16px;height:16px"><svg width="16" height="16" viewBox="0 0 16 16" style="display:block;overflow:visible"><path d="M2.500.5h10v10.500h2v4.500h-12z" fill="#fbd78c" stroke="#f2b040" stroke-width="1"/><path d="M4.500 3h6M4.500 5.500h6M4.500 8h6M4.500 10.500h6M4.500 13h6" stroke="#fdeabc" stroke-width="1.200" stroke-dasharray="1.200 1.300"/></svg></div>
<div class="tt" style="color:#808080;text-decoration:line-through;letter-spacing:0.327px">This is a completed task</div>
<div class="c" style="right:525px;color:#808080;text-decoration:line-through;">9</div>
<div class="c" style="right:313px;color:#808080;text-decoration:line-through;">7.00 D</div>
</div>
<div class="row" style="top:305px;background:#fff">
<div class="gl" style="left:0;top:16px;width:745px;height:1px"></div>
<div class="gl" style="left:222px;top:0;width:1px;height:17px"></div>
<div class="gl" style="left:241px;top:0;width:1px;height:17px"></div>
<div class="gl" style="left:260px;top:0;width:1px;height:17px"></div>
<div class="gl" style="left:279px;top:0;width:1px;height:17px"></div>
<div class="gl" style="left:298px;top:0;width:1px;height:17px"></div>
<div class="gl" style="left:320px;top:0;width:1px;height:17px"></div>
<div class="gl" style="left:339px;top:0;width:1px;height:17px"></div>
<div class="gl" style="left:374px;top:0;width:1px;height:17px"></div>
<div class="gl" style="left:434px;top:0;width:1px;height:17px"></div>
<div class="gl" style="left:471px;top:0;width:1px;height:17px"></div>
<div class="gl" style="left:533px;top:0;width:1px;height:17px"></div>
<div class="gl" style="left:595px;top:0;width:1px;height:17px"></div>
<div class="gl" style="left:632px;top:0;width:1px;height:17px"></div>
<div class="gl" style="left:679px;top:0;width:1px;height:17px"></div>
<div class="gl" style="left:715px;top:0;width:1px;height:17px"></div>
<div class="dot-h" style="left:12px;top:8px;width:11px"></div>
<div class="dot-v" style="left:11px;top:0;height:17px"></div>
<div class="cb"></div>
<div class="a" style="left:41px;top:0;width:16px;height:16px"><svg width="16" height="16" viewBox="0 0 16 16" style="display:block;overflow:visible"><path d="M2.500 3.500v9c0 3 11 3 11 0v-9" fill="#d0d0d0" stroke="#9a9a9a"/><ellipse cx="8" cy="3.500" rx="5.500" ry="2.500" fill="#f0f0f0" stroke="#9a9a9a"/><path d="M5 6.500v6" stroke="#fff" stroke-width="1.600" opacity=".8"/></svg></div>
<div class="tt" style="color:#10c6e6;letter-spacing:0.337px">Adding Comments to T...</div>
<div class="c" style="right:525px;color:#10c6e6;">15</div>
<div class="pb" style="background:#00ccee;color:#000;border-color:#007082">3</div>
<div class="c" style="left:348px;color:#10c6e6">0%</div>
<div class="c" style="right:313px;color:#10c6e6;">7.00 D</div>
<div class="c" style="right:213px;color:#10c6e6">2025/1/13</div>
<div class="c" style="right:151px;color:#10c6e6">2025/1/19</div>
</div>
<div class="row" style="top:322px;background:#ebebff">
<div class="gl" style="left:0;top:16px;width:745px;height:1px"></div>
<div class="gl" style="left:222px;top:0;width:1px;height:17px"></div>
<div class="gl" style="left:241px;top:0;width:1px;height:17px"></div>
<div class="gl" style="left:260px;top:0;width:1px;height:17px"></div>
<div class="gl" style="left:279px;top:0;width:1px;height:17px"></div>
<div class="gl" style="left:298px;top:0;width:1px;height:17px"></div>
<div class="gl" style="left:320px;top:0;width:1px;height:17px"></div>
<div class="gl" style="left:339px;top:0;width:1px;height:17px"></div>
<div class="gl" style="left:374px;top:0;width:1px;height:17px"></div>
<div class="gl" style="left:434px;top:0;width:1px;height:17px"></div>
<div class="gl" style="left:471px;top:0;width:1px;height:17px"></div>
<div class="gl" style="left:533px;top:0;width:1px;height:17px"></div>
<div class="gl" style="left:595px;top:0;width:1px;height:17px"></div>
<div class="gl" style="left:632px;top:0;width:1px;height:17px"></div>
<div class="gl" style="left:679px;top:0;width:1px;height:17px"></div>
<div class="gl" style="left:715px;top:0;width:1px;height:17px"></div>
<div class="dot-h" style="left:12px;top:8px;width:11px"></div>
<div class="dot-v" style="left:11px;top:0;height:17px"></div>
<div class="cb"></div>
<div class="a" style="left:41px;top:0;width:16px;height:16px"><svg width="16" height="16" viewBox="0 0 16 16" style="display:block;overflow:visible"><rect x="1" y=".8" width="14" height="10" rx="1" fill="#b8bcc4" stroke="#7a7e88" stroke-width=".8"/><rect x="2.500" y="2.200" width="11" height="7.200" fill="#3a7ae0"/><path d="M3 3.500h10M3 5.500h10M3 7.500h10" stroke="#7ab0f0" stroke-width=".8"/><path d="M6 11h4v2.500H6z" fill="#8a8e98"/><rect x="3.500" y="13.500" width="9" height="2" rx="1" fill="#a8acb4" stroke="#7a7e88" stroke-width=".6"/></svg></div>
<div class="tt" style="color:#1468ee;letter-spacing:0.208px">Colouring Tasks<span class="cm a" style="left:99.0px;top:0;letter-spacing:0.05px">Tasks...</span></div>
<div class="c" style="right:525px;color:#1468ee;">13</div>
<div class="pb" style="background:#0a6cf0;color:#fff;border-color:#053b84">4</div>
<div class="a" style="left:303px;top:2px;width:14px;height:11px"><svg width="14" height="11" viewBox="0 0 14 11" style="display:block;overflow:visible"><rect x=".5" y=".5" width="13" height="10" fill="#fff" stroke="#8e8e8e"/><rect x="2" y="2" width="10" height="7" fill="#4a92f0"/><path d="M2 4.500c2-1.500 4-.5 5.500-.8S10.500 3 12 4v2H2z" fill="#e8f0fa"/><path d="M2 7.500V5.300c1.500-.5 3 .2 4.500 1s3 .7 5.500.2v1z" fill="#4a5a52"/><path d="M2 9V7.500c3-.5 6 .5 10-.5v2z" fill="#6a9ae0"/></svg></div>
<div class="c" style="left:348px;color:#1468ee">0%</div>
<div class="c" style="right:313px;color:#1468ee;">7.00 D</div>
<div class="c" style="right:213px;color:#1468ee">2025/1/13</div>
<div class="c" style="right:151px;color:#1468ee">2025/1/19</div>
</div>
<div class="row" style="top:339px;background:#fff">
<div class="gl" style="left:0;top:16px;width:745px;height:1px"></div>
<div class="gl" style="left:222px;top:0;width:1px;height:17px"></div>
<div class="gl" style="left:241px;top:0;width:1px;height:17px"></div>
<div class="gl" style="left:260px;top:0;width:1px;height:17px"></div>
<div class="gl" style="left:279px;top:0;width:1px;height:17px"></div>
<div class="gl" style="left:298px;top:0;width:1px;height:17px"></div>
<div class="gl" style="left:320px;top:0;width:1px;height:17px"></div>
<div class="gl" style="left:339px;top:0;width:1px;height:17px"></div>
<div class="gl" style="left:374px;top:0;width:1px;height:17px"></div>
<div class="gl" style="left:434px;top:0;width:1px;height:17px"></div>
<div class="gl" style="left:471px;top:0;width:1px;height:17px"></div>
<div class="gl" style="left:533px;top:0;width:1px;height:17px"></div>
<div class="gl" style="left:595px;top:0;width:1px;height:17px"></div>
<div class="gl" style="left:632px;top:0;width:1px;height:17px"></div>
<div class="gl" style="left:679px;top:0;width:1px;height:17px"></div>
<div class="gl" style="left:715px;top:0;width:1px;height:17px"></div>
<div class="dot-h" style="left:12px;top:8px;width:11px"></div>
<div class="dot-v" style="left:11px;top:0;height:17px"></div>
<div class="cb"></div>
<div class="a" style="left:41px;top:0;width:16px;height:16px"><svg width="16" height="16" viewBox="0 0 16 16" style="display:block;overflow:visible"><defs><radialGradient id="blr" cx=".4" cy=".35" r=".7"><stop offset="0" stop-color="#f4f4f4"/><stop offset="1" stop-color="#8e8e8e"/></radialGradient></defs><circle cx="8" cy="8" r="7.300" fill="url(#blr)" stroke="#6a6a6a" stroke-width=".8"/><path d="M8 5.200l2.400 1.800-.9 2.800H6.500l-.9-2.800z" fill="#3a3a3a"/><path d="M1.500 5l2 .5.800 2.200-1.600 1.600-1.900-.6zM14.500 5l-2 .5-.8 2.200 1.600 1.600 1.900-.6zM5.500 13.500l.5-2.200h4l.5 2.200-2.500 1.300z" fill="#3a3a3a"/><path d="M6 1.300l2 .9 2-.9" stroke="#3a3a3a" stroke-width="1.200" fill="none"/></svg></div>
<div class="tt" style="color:#1470f0;letter-spacing:0.359px">Categorizing Tasks<span class="cm a" style="left:117.0px;top:0;letter-spacing:0.332px">T...</span></div>
<div class="c" style="right:525px;color:#1470f0;">14</div>
<div class="pb" style="background:#0a6cf0;color:#fff;border-color:#053b84">4</div>
<div class="a" style="left:243px;top:0;width:16px;height:16px"><svg width="16" height="16" viewBox="0 0 16 16" style="display:block;overflow:visible"><path d="M5.300 7.500V5c0-3.600 5.400-3.600 5.400 0v2.500" stroke="#222" stroke-width="1.100" fill="none"/><rect x="3.300" y="7" width="9.400" height="8" rx="2.600" fill="#fff" stroke="#222" stroke-width="1.100"/><rect x="7.200" y="9" width="1.800" height="4" fill="#444"/></svg></div>
<div class="c" style="left:348px;color:#1470f0">0%</div>
<div class="c" style="right:313px;color:#1470f0;">7.00 D</div>
<div class="c" style="right:275px;color:#1470f0">0.00 H</div>
<div class="c" style="right:213px;color:#1470f0">2025/1/13</div>
<div class="c" style="right:151px;color:#1470f0">2025/1/19</div>
</div>
<div class="row" style="top:356px;background:#ebebff">
<div class="gl" style="left:0;top:16px;width:745px;height:1px"></div>
<div class="gl" style="left:222px;top:0;width:1px;height:17px"></div>
<div class="gl" style="left:241px;top:0;width:1px;height:17px"></div>
<div class="gl" style="left:260px;top:0;width:1px;height:17px"></div>
<div class="gl" style="left:279px;top:0;width:1px;height:17px"></div>
<div class="gl" style="left:298px;top:0;width:1px;height:17px"></div>
<div class="gl" style="left:320px;top:0;width:1px;height:17px"></div>
<div class="gl" style="left:339px;top:0;width:1px;height:17px"></div>
<div class="gl" style="left:374px;top:0;width:1px;height:17px"></div>
<div class="gl" style="left:434px;top:0;width:1px;height:17px"></div>
<div class="gl" style="left:471px;top:0;width:1px;height:17px"></div>
<div class="gl" style="left:533px;top:0;width:1px;height:17px"></div>
<div class="gl" style="left:595px;top:0;width:1px;height:17px"></div>
<div class="gl" style="left:632px;top:0;width:1px;height:17px"></div>
<div class="gl" style="left:679px;top:0;width:1px;height:17px"></div>
<div class="gl" style="left:715px;top:0;width:1px;height:17px"></div>
<div class="dot-h" style="left:12px;top:8px;width:11px"></div>
<div class="dot-v" style="left:11px;top:0;height:17px"></div>
<div class="cb"></div>
<div class="a" style="left:41px;top:0;width:16px;height:16px"><svg width="16" height="16" viewBox="0 0 16 16" style="display:block;overflow:visible"><path d="M8 .8l2.200 4.800 5.200.6-3.900 3.500 1.100 5.200L8 12.200 3.400 14.900l1.100-5.200L.6 6.200l5.200-.6z" fill="#fbbf30" stroke="#e89a18" stroke-width=".8" stroke-linejoin="round"/><path d="M8 3l1.300 3.200-3.800.6z" fill="#fde48a"/></svg></div>
<div class="tt" style="color:#0808dc;letter-spacing:0.327px">Likewise for the task&#x27;s ...</div>
<div class="c" style="right:525px;color:#0808dc;">16</div>
<div class="pb" style="background:#0000d2;color:#fff;border-color:#000073">5</div>
<div class="a" style="left:303px;top:2px;width:14px;height:11px"><svg width="14" height="11" viewBox="0 0 14 11" style="display:block;overflow:visible"><rect x=".5" y=".5" width="13" height="10" fill="#fff" stroke="#8e8e8e"/><rect x="2" y="2" width="10" height="7" fill="#4a92f0"/><path d="M2 4.500c2-1.500 4-.5 5.500-.8S10.500 3 12 4v2H2z" fill="#e8f0fa"/><path d="M2 7.500V5.300c1.500-.5 3 .2 4.500 1s3 .7 5.500.2v1z" fill="#4a5a52"/><path d="M2 9V7.500c3-.5 6 .5 10-.5v2z" fill="#6a9ae0"/></svg></div>
<div class="c" style="left:348px;color:#0808dc">0%</div>
<div class="c" style="right:213px;color:#0808dc">2025/1/20</div>
<div class="c" style="right:151px;color:#0808dc">2025/1/27</div>
</div>
<div class="row" style="top:373px;background:#fff">
<div class="gl" style="left:0;top:16px;width:745px;height:1px"></div>
<div class="gl" style="left:222px;top:0;width:1px;height:17px"></div>
<div class="gl" style="left:241px;top:0;width:1px;height:17px"></div>
<div class="gl" style="left:260px;top:0;width:1px;height:17px"></div>
<div class="gl" style="left:279px;top:0;width:1px;height:17px"></div>
<div class="gl" style="left:298px;top:0;width:1px;height:17px"></div>
<div class="gl" style="left:320px;top:0;width:1px;height:17px"></div>
<div class="gl" style="left:339px;top:0;width:1px;height:17px"></div>
<div class="gl" style="left:374px;top:0;width:1px;height:17px"></div>
<div class="gl" style="left:434px;top:0;width:1px;height:17px"></div>
<div class="gl" style="left:471px;top:0;width:1px;height:17px"></div>
<div class="gl" style="left:533px;top:0;width:1px;height:17px"></div>
<div class="gl" style="left:595px;top:0;width:1px;height:17px"></div>
<div class="gl" style="left:632px;top:0;width:1px;height:17px"></div>
<div class="gl" style="left:679px;top:0;width:1px;height:17px"></div>
<div class="gl" style="left:715px;top:0;width:1px;height:17px"></div>
<div class="dot-h" style="left:12px;top:8px;width:11px"></div>
<div class="dot-v" style="left:11px;top:0;height:17px"></div>
<div class="cb"></div>
<div class="a" style="left:41px;top:0;width:16px;height:16px"><svg width="16" height="16" viewBox="0 0 16 16" style="display:block;overflow:visible"><path d="M4 12.500l7.500-7.500c1.500-1.500-.5-3.500-2-2L3 9.500c-2.500 2.500.5 5.500 3 3l7-7" fill="none" stroke="#8a8e94" stroke-width="1.300" stroke-linecap="round"/></svg></div>
<div class="tt" style="color:#6408f0;letter-spacing:0.285px">Associated Files with T...</div>
<div class="c" style="right:525px;color:#6408f0;">17</div>
<div class="pb" style="background:#5a00dc;color:#fff;border-color:#310079">6</div>
<div class="a" style="left:243px;top:0;width:16px;height:16px"><svg width="16" height="16" viewBox="0 0 16 16" style="display:block;overflow:visible"><path d="M5.300 7.500V5c0-3.600 5.400-3.600 5.400 0v2.500" stroke="#222" stroke-width="1.100" fill="none"/><rect x="3.300" y="7" width="9.400" height="8" rx="2.600" fill="#fff" stroke="#222" stroke-width="1.100"/><rect x="7.200" y="9" width="1.800" height="4" fill="#444"/></svg></div>
<div class="c" style="left:348px;color:#6408f0">0%</div>
<div class="c" style="right:213px;color:#6408f0">2025/1/28</div>
<div class="c" style="right:151px;color:#6408f0">2025/2/4</div>
</div>
<div class="row" style="top:390px;background:#ebebff">
<div class="gl" style="left:0;top:16px;width:745px;height:1px"></div>
<div class="gl" style="left:222px;top:0;width:1px;height:17px"></div>
<div class="gl" style="left:241px;top:0;width:1px;height:17px"></div>
<div class="gl" style="left:260px;top:0;width:1px;height:17px"></div>
<div class="gl" style="left:279px;top:0;width:1px;height:17px"></div>
<div class="gl" style="left:298px;top:0;width:1px;height:17px"></div>
<div class="gl" style="left:320px;top:0;width:1px;height:17px"></div>
<div class="gl" style="left:339px;top:0;width:1px;height:17px"></div>
<div class="gl" style="left:374px;top:0;width:1px;height:17px"></div>
<div class="gl" style="left:434px;top:0;width:1px;height:17px"></div>
<div class="gl" style="left:471px;top:0;width:1px;height:17px"></div>
<div class="gl" style="left:533px;top:0;width:1px;height:17px"></div>
<div class="gl" style="left:595px;top:0;width:1px;height:17px"></div>
<div class="gl" style="left:632px;top:0;width:1px;height:17px"></div>
<div class="gl" style="left:679px;top:0;width:1px;height:17px"></div>
<div class="gl" style="left:715px;top:0;width:1px;height:17px"></div>
<div class="dot-h" style="left:12px;top:8px;width:11px"></div>
<div class="dot-v" style="left:11px;top:0;height:17px"></div>
<div class="cb"></div>
<div class="a" style="left:41px;top:0;width:16px;height:16px"><svg width="16" height="16" viewBox="0 0 16 16" style="display:block;overflow:visible"><path d="M3.500 6.500l4.500-4.800 4.500 4.800" fill="none" stroke="#4a7ad0" stroke-width="1.600"/><path d="M.8 6.500h14.400l-1.500 8h-11.400z" fill="#eceef0" stroke="#8a8e94" stroke-width=".9"/><path d="M4 8v5M6.700 8v5M9.300 8v5M12 8v5M2 10.500h12" stroke="#9a9ea4" stroke-width=".9"/></svg></div>
<div class="tt" style="color:#5a08e0;letter-spacing:0.426px">Navigating the Tasklist</div>
<div class="c" style="right:525px;color:#5a08e0;">24</div>
<div class="pb" style="background:#5a00dc;color:#fff;border-color:#310079">6</div>
<div class="a" style="left:303px;top:2px;width:14px;height:11px"><svg width="14" height="11" viewBox="0 0 14 11" style="display:block;overflow:visible"><rect x=".5" y=".5" width="13" height="10" fill="#fff" stroke="#8e8e8e"/><rect x="2" y="2" width="10" height="7" fill="#4a92f0"/><path d="M2 4.500c2-1.500 4-.5 5.500-.8S10.500 3 12 4v2H2z" fill="#e8f0fa"/><path d="M2 7.500V5.300c1.500-.5 3 .2 4.500 1s3 .7 5.500.2v1z" fill="#4a5a52"/><path d="M2 9V7.500c3-.5 6 .5 10-.5v2z" fill="#6a9ae0"/></svg></div>
<div class="c" style="left:348px;color:#5a08e0">0%</div>
<div class="c" style="right:213px;color:#5a08e0">2025/2/5</div>
<div class="c" style="right:151px;color:#5a08e0">2025/2/12</div>
<div class="c cj" style="left:600px;color:#5a08e0;font-size:12px">每天</div>
</div>
<div class="row" style="top:407px;background:#fff">
<div class="gl" style="left:0;top:16px;width:745px;height:1px"></div>
<div class="gl" style="left:222px;top:0;width:1px;height:17px"></div>
<div class="gl" style="left:241px;top:0;width:1px;height:17px"></div>
<div class="gl" style="left:260px;top:0;width:1px;height:17px"></div>
<div class="gl" style="left:279px;top:0;width:1px;height:17px"></div>
<div class="gl" style="left:298px;top:0;width:1px;height:17px"></div>
<div class="gl" style="left:320px;top:0;width:1px;height:17px"></div>
<div class="gl" style="left:339px;top:0;width:1px;height:17px"></div>
<div class="gl" style="left:374px;top:0;width:1px;height:17px"></div>
<div class="gl" style="left:434px;top:0;width:1px;height:17px"></div>
<div class="gl" style="left:471px;top:0;width:1px;height:17px"></div>
<div class="gl" style="left:533px;top:0;width:1px;height:17px"></div>
<div class="gl" style="left:595px;top:0;width:1px;height:17px"></div>
<div class="gl" style="left:632px;top:0;width:1px;height:17px"></div>
<div class="gl" style="left:679px;top:0;width:1px;height:17px"></div>
<div class="gl" style="left:715px;top:0;width:1px;height:17px"></div>
<div class="dot-h" style="left:12px;top:8px;width:11px"></div>
<div class="dot-v" style="left:11px;top:0;height:17px"></div>
<div class="cb"></div>
<div class="a" style="left:41px;top:0;width:16px;height:16px"><svg width="16" height="16" viewBox="0 0 16 16" style="display:block;overflow:visible"><path d="M1 6l7-3 7 3v6l-7 3.500L1 12z" fill="#d8d8d8" stroke="#9a9a9a" stroke-width=".8"/><path d="M1 6l7 3.500L15 6M8 9.500v6" stroke="#9a9a9a" stroke-width=".8" fill="none"/><ellipse cx="5.500" cy="3.800" rx="2.300" ry="1.300" fill="#eaeaea" stroke="#9a9a9a" stroke-width=".7"/><ellipse cx="10.500" cy="3.800" rx="2.300" ry="1.300" fill="#eaeaea" stroke="#9a9a9a" stroke-width=".7"/><ellipse cx="8" cy="2" rx="2.300" ry="1.300" fill="#eaeaea" stroke="#9a9a9a" stroke-width=".7"/></svg></div>
<div class="tt" style="color:#c814f0;letter-spacing:0.325px">Filtering Tasks<span class="cm a" style="left:92.0px;top:0;letter-spacing:0.122px">Once y...</span></div>
<div class="c" style="right:525px;color:#c814f0;">18</div>
<div class="pb" style="background:#be00f0;color:#fff;border-color:#680084">7</div>
<div class="c" style="left:348px;color:#c814f0">0%</div>
<div class="c" style="right:213px;color:#c814f0">2025/2/13</div>
<div class="c" style="right:151px;color:#c814f0">2025/2/20</div>
</div>
<div class="row" style="top:424px;background:#ebebff">
<div class="gl" style="left:0;top:16px;width:745px;height:1px"></div>
<div class="gl" style="left:222px;top:0;width:1px;height:17px"></div>
<div class="gl" style="left:241px;top:0;width:1px;height:17px"></div>
<div class="gl" style="left:260px;top:0;width:1px;height:17px"></div>
<div class="gl" style="left:279px;top:0;width:1px;height:17px"></div>
<div class="gl" style="left:298px;top:0;width:1px;height:17px"></div>
<div class="gl" style="left:320px;top:0;width:1px;height:17px"></div>
<div class="gl" style="left:339px;top:0;width:1px;height:17px"></div>
<div class="gl" style="left:374px;top:0;width:1px;height:17px"></div>
<div class="gl" style="left:434px;top:0;width:1px;height:17px"></div>
<div class="gl" style="left:471px;top:0;width:1px;height:17px"></div>
<div class="gl" style="left:533px;top:0;width:1px;height:17px"></div>
<div class="gl" style="left:595px;top:0;width:1px;height:17px"></div>
<div class="gl" style="left:632px;top:0;width:1px;height:17px"></div>
<div class="gl" style="left:679px;top:0;width:1px;height:17px"></div>
<div class="gl" style="left:715px;top:0;width:1px;height:17px"></div>
<div class="dot-h" style="left:12px;top:8px;width:11px"></div>
<div class="dot-v" style="left:11px;top:0;height:17px"></div>
<div class="cb"></div>
<div class="a" style="left:41px;top:0;width:16px;height:16px"><svg width="16" height="16" viewBox="0 0 16 16" style="display:block;overflow:visible"><circle cx="8" cy="8" r="7.300" fill="#e8482e" stroke="#d03a22" stroke-width=".8"/><circle cx="8" cy="8" r="5.600" fill="none" stroke="#f6a090" stroke-width=".9"/><rect x="7" y="3.800" width="2" height="5.700" rx="1" fill="#fff"/><circle cx="8" cy="11.500" r="1.100" fill="#fff"/></svg></div>
<div class="tt" style="color:#f00ac8;letter-spacing:0.543px">Importing Tasks<span class="cm a" style="left:103.2px;top:0;letter-spacing:0.728px">ToD...</span></div>
<div class="c" style="right:525px;color:#f00ac8;">19</div>
<div class="pb" style="background:#f000c0;color:#fff;border-color:#840069">8</div>
<div class="c" style="left:348px;color:#f00ac8">0%</div>
<div class="c" style="right:313px;color:#f00ac8;">7.00 D</div>
<div class="c" style="right:213px;color:#f00ac8">2025/1/13</div>
<div class="c" style="right:151px;color:#f00ac8">2025/1/19</div>
</div>
<div class="row" style="top:441px;background:#fff">
<div class="gl" style="left:0;top:16px;width:745px;height:1px"></div>
<div class="gl" style="left:222px;top:0;width:1px;height:17px"></div>
<div class="gl" style="left:241px;top:0;width:1px;height:17px"></div>
<div class="gl" style="left:260px;top:0;width:1px;height:17px"></div>
<div class="gl" style="left:279px;top:0;width:1px;height:17px"></div>
<div class="gl" style="left:298px;top:0;width:1px;height:17px"></div>
<div class="gl" style="left:320px;top:0;width:1px;height:17px"></div>
<div class="gl" style="left:339px;top:0;width:1px;height:17px"></div>
<div class="gl" style="left:374px;top:0;width:1px;height:17px"></div>
<div class="gl" style="left:434px;top:0;width:1px;height:17px"></div>
<div class="gl" style="left:471px;top:0;width:1px;height:17px"></div>
<div class="gl" style="left:533px;top:0;width:1px;height:17px"></div>
<div class="gl" style="left:595px;top:0;width:1px;height:17px"></div>
<div class="gl" style="left:632px;top:0;width:1px;height:17px"></div>
<div class="gl" style="left:679px;top:0;width:1px;height:17px"></div>
<div class="gl" style="left:715px;top:0;width:1px;height:17px"></div>
<div class="dot-h" style="left:12px;top:8px;width:11px"></div>
<div class="dot-v" style="left:11px;top:0;height:17px"></div>
<div class="cb"></div>
<div class="a" style="left:41px;top:0;width:16px;height:16px"><svg width="16" height="16" viewBox="0 0 16 16" style="display:block;overflow:visible"><path d="M4 2.500v4M8 2v4.500M12 2.500v4" stroke="#4a86e0" stroke-width="1.800"/><ellipse cx="4" cy="1.500" rx="1" ry="1.500" fill="#f8c020"/><ellipse cx="8" cy="1.200" rx="1" ry="1.500" fill="#f8c020"/><ellipse cx="12" cy="1.500" rx="1" ry="1.500" fill="#f8c020"/><path d="M1 7.500c0-3 14-3 14 0v5.500c0 3-14 3-14 0z" fill="#f8b040" stroke="#e08a20" stroke-width=".8"/><ellipse cx="8" cy="7.500" rx="6.600" ry="2" fill="#fff4e0"/><path d="M1.300 10.500c3 2 10.400 2 13.400 0" stroke="#e8502a" stroke-width="1.100" fill="none"/><path d="M1.300 12.500c3 2 10.400 2 13.400 0" stroke="#fbd68a" stroke-width="1" fill="none"/></svg></div>
<div class="tt" style="color:#f00ac8;letter-spacing:0.302px">Exporting Tasks<span class="cm a" style="left:100.5px;top:0;letter-spacing:0.02px">ToDo...</span></div>
<div class="c" style="right:525px;color:#f00ac8;">20</div>
<div class="pb" style="background:#f000c0;color:#fff;border-color:#840069">8</div>
<div class="a" style="left:281px;top:0;width:18px;height:16px"><svg width="18" height="16" viewBox="0 0 18 16" style="display:block;overflow:visible"><path d="M1.500 9.500l5-4v2.300h6V3.500h3v7.800h-9v2.200z" fill="#fff" stroke="#222" stroke-width="1" stroke-linejoin="round"/></svg></div>
<div class="c" style="left:348px;color:#f00ac8">0%</div>
<div class="c" style="right:213px;color:#f00ac8">2025/1/25</div>
<div class="c" style="right:151px;color:#f00ac8">2025/2/1</div>
</div>
<div class="row" style="top:458px;background:#ebebff">
<div class="gl" style="left:0;top:16px;width:745px;height:1px"></div>
<div class="gl" style="left:222px;top:0;width:1px;height:17px"></div>
<div class="gl" style="left:241px;top:0;width:1px;height:17px"></div>
<div class="gl" style="left:260px;top:0;width:1px;height:17px"></div>
<div class="gl" style="left:279px;top:0;width:1px;height:17px"></div>
<div class="gl" style="left:298px;top:0;width:1px;height:17px"></div>
<div class="gl" style="left:320px;top:0;width:1px;height:17px"></div>
<div class="gl" style="left:339px;top:0;width:1px;height:17px"></div>
<div class="gl" style="left:374px;top:0;width:1px;height:17px"></div>
<div class="gl" style="left:434px;top:0;width:1px;height:17px"></div>
<div class="gl" style="left:471px;top:0;width:1px;height:17px"></div>
<div class="gl" style="left:533px;top:0;width:1px;height:17px"></div>
<div class="gl" style="left:595px;top:0;width:1px;height:17px"></div>
<div class="gl" style="left:632px;top:0;width:1px;height:17px"></div>
<div class="gl" style="left:679px;top:0;width:1px;height:17px"></div>
<div class="gl" style="left:715px;top:0;width:1px;height:17px"></div>
<div class="dot-h" style="left:12px;top:8px;width:11px"></div>
<div class="dot-v" style="left:11px;top:0;height:17px"></div>
<div class="cb"></div>
<div class="a" style="left:41px;top:0;width:16px;height:16px"><svg width="16" height="16" viewBox="0 0 16 16" style="display:block;overflow:visible"><path d="M15.300.7c-3 1.200-7 4.800-9 7.600l1.700 1.700c2.800-2 6.300-6.300 7.300-9.300z" fill="#f0b460" stroke="#c8843a" stroke-width=".7"/><path d="M5.800 8.600l1.700 1.700c-.6 2.400-3.400 4.400-6.800 4.400 1.800-1.200 1.800-4.700 5.100-6.100z" fill="#4a82d8" stroke="#2a58a8" stroke-width=".6"/></svg></div>
<div class="tt" style="color:#f00a64;letter-spacing:0.313px">Sharing Tasklists<span class="cm a" style="left:106.2px;top:0;letter-spacing:0.467px">If y...</span></div>
<div class="c" style="right:525px;color:#f00a64;">21</div>
<div class="pb" style="background:#f0005a;color:#fff;border-color:#840031">9</div>
<div class="a" style="left:281px;top:0;width:18px;height:16px"><svg width="18" height="16" viewBox="0 0 18 16" style="display:block;overflow:visible"><path d="M1.500 9.500l5-4v2.300h6V3.500h3v7.800h-9v2.200z" fill="#fff" stroke="#222" stroke-width="1" stroke-linejoin="round"/></svg></div>
<div class="a" style="left:303px;top:2px;width:14px;height:11px"><svg width="14" height="11" viewBox="0 0 14 11" style="display:block;overflow:visible"><rect x=".5" y=".5" width="13" height="10" fill="#fff" stroke="#8e8e8e"/><rect x="2" y="2" width="10" height="7" fill="#4a92f0"/><path d="M2 4.500c2-1.500 4-.5 5.500-.8S10.500 3 12 4v2H2z" fill="#e8f0fa"/><path d="M2 7.500V5.300c1.500-.5 3 .2 4.500 1s3 .7 5.500.2v1z" fill="#4a5a52"/><path d="M2 9V7.500c3-.5 6 .5 10-.5v2z" fill="#6a9ae0"/></svg></div>
<div class="c" style="left:348px;color:#f00a64">0%</div>
<div class="c" style="right:213px;color:#f00a64">2025/2/2</div>
<div class="c" style="right:151px;color:#f00a64">2025/2/9</div>
</div>
<div class="row" style="top:475px;background:#fff">
<div class="gl" style="left:0;top:16px;width:745px;height:1px"></div>
<div class="gl" style="left:222px;top:0;width:1px;height:17px"></div>
<div class="gl" style="left:241px;top:0;width:1px;height:17px"></div>
<div class="gl" style="left:260px;top:0;width:1px;height:17px"></div>
<div class="gl" style="left:279px;top:0;width:1px;height:17px"></div>
<div class="gl" style="left:298px;top:0;width:1px;height:17px"></div>
<div class="gl" style="left:320px;top:0;width:1px;height:17px"></div>
<div class="gl" style="left:339px;top:0;width:1px;height:17px"></div>
<div class="gl" style="left:374px;top:0;width:1px;height:17px"></div>
<div class="gl" style="left:434px;top:0;width:1px;height:17px"></div>
<div class="gl" style="left:471px;top:0;width:1px;height:17px"></div>
<div class="gl" style="left:533px;top:0;width:1px;height:17px"></div>
<div class="gl" style="left:595px;top:0;width:1px;height:17px"></div>
<div class="gl" style="left:632px;top:0;width:1px;height:17px"></div>
<div class="gl" style="left:679px;top:0;width:1px;height:17px"></div>
<div class="gl" style="left:715px;top:0;width:1px;height:17px"></div>
<div class="dot-h" style="left:12px;top:8px;width:11px"></div>
<div class="dot-v" style="left:11px;top:0;height:9px"></div>
<div class="cb"></div>
<div class="a" style="left:41px;top:0;width:16px;height:16px"><svg width="16" height="16" viewBox="0 0 16 16" style="display:block;overflow:visible"><path d="M8 14.800C3 11 .7 8.500.7 5.500.7 1.500 6 .5 8 4c2-3.500 7.300-2.500 7.300 1.500 0 3-2.300 5.500-7.300 9.300z" fill="#f48a80" stroke="#e04438" stroke-width=".9"/><path d="M3 5c.3-2 2.500-2.500 3.500-1.500M3.500 8l8-3M5 10.500l7-3" stroke="#fcc4bc" stroke-width="1.200" fill="none" stroke-dasharray="1.500 1"/></svg></div>
<div class="tt" style="color:#f00a64;letter-spacing:0.359px">Getting Help<span class="cm a" style="left:80.2px;top:0;letter-spacing:-0.005px">There are...</span></div>
<div class="c" style="right:525px;color:#f00a64;">23</div>
<div class="pb" style="background:#f0005a;color:#fff;border-color:#840031">9</div>
<div class="a" style="left:281px;top:0;width:18px;height:16px"><svg width="18" height="16" viewBox="0 0 18 16" style="display:block;overflow:visible"><path d="M1.500 9.500l5-4v2.300h6V3.500h3v7.800h-9v2.200z" fill="#fff" stroke="#222" stroke-width="1" stroke-linejoin="round"/></svg></div>
<div class="c" style="left:348px;color:#f00a64">0%</div>
<div class="c" style="right:213px;color:#f00a64">2025/2/5</div>
<div class="c" style="right:151px;color:#f00a64">2025/2/12</div>
</div>
<div class="a" style="left:204px;top:230px;width:1px;height:447px;background:#86a9c8"></div>
<div class="a" style="left:5px;top:661px;width:199px;height:16px;background:#f0f0f0"></div>
<div class="a" style="left:22px;top:662px;width:77px;height:15px;background:#cdcdcd"></div>
<div class="a" style="left:205px;top:661px;width:545px;height:16px;background:#f0f0f0"></div>
<div class="a" style="left:222px;top:662px;width:473px;height:15px;background:#cdcdcd"></div>
<svg class="a" style="left:10px;top:664px" width="7" height="9" viewBox="0 0 7 9"><path d="M5.500 1L1.500 4.500l4 3.500" stroke="#505050" stroke-width="2.100" fill="none"/></svg>
<svg class="a" style="left:193px;top:664px" width="7" height="9" viewBox="0 0 7 9"><path d="M1.500 1l4 3.500-4 3.500" stroke="#505050" stroke-width="2.100" fill="none"/></svg>
<svg class="a" style="left:210px;top:664px" width="7" height="9" viewBox="0 0 7 9"><path d="M5.500 1L1.500 4.500l4 3.500" stroke="#505050" stroke-width="2.100" fill="none"/></svg>
<svg class="a" style="left:739px;top:664px" width="7" height="9" viewBox="0 0 7 9"><path d="M1.500 1l4 3.500-4 3.500" stroke="#505050" stroke-width="2.100" fill="none"/></svg>
<div class="a" style="left:4px;top:677px;width:747px;height:1px;background:#a0a0a0"></div>
<div class="a" style="left:5px;top:678px;width:746px;height:18px;background:#f0f0f0"></div>
<div class="a" style="left:4px;top:678px;width:77px;height:20px;background:#fff;border:1px solid #c9ccd2;border-top:none;border-left-color:#9aa2ae"></div>
<div class="a" style="left:173px;top:679px;width:1px;height:16px;background:#fbfbfb"></div><div class="a" style="left:174px;top:679px;width:1px;height:16px;background:#dcdcdc"></div>
<div class="a" style="left:231px;top:679px;width:1px;height:16px;background:#fbfbfb"></div><div class="a" style="left:232px;top:679px;width:1px;height:16px;background:#dcdcdc"></div>
<div class="a" style="left:301px;top:679px;width:1px;height:16px;background:#fbfbfb"></div><div class="a" style="left:302px;top:679px;width:1px;height:16px;background:#dcdcdc"></div>
<div class="a" style="left:382px;top:679px;width:1px;height:16px;background:#fbfbfb"></div><div class="a" style="left:383px;top:679px;width:1px;height:16px;background:#dcdcdc"></div>
<div class="a" style="left:464px;top:679px;width:1px;height:16px;background:#fbfbfb"></div><div class="a" style="left:465px;top:679px;width:1px;height:16px;background:#dcdcdc"></div>
<div class="a" style="left:547px;top:679px;width:1px;height:16px;background:#fbfbfb"></div><div class="a" style="left:548px;top:679px;width:1px;height:16px;background:#dcdcdc"></div>
<div class="a" style="left:617px;top:679px;width:1px;height:16px;background:#fbfbfb"></div><div class="a" style="left:618px;top:679px;width:1px;height:16px;background:#dcdcdc"></div>
<div class="a" style="left:713px;top:679px;width:1px;height:16px;background:#fbfbfb"></div><div class="a" style="left:714px;top:679px;width:1px;height:16px;background:#dcdcdc"></div>
<div class="ic" style="left:10px;top:679px"><svg width="16" height="16" viewBox="0 0 16 16" style="display:block;overflow:visible"><path d="M2.500 0v12.500h4M2.500 4.500h4" stroke="#444" stroke-dasharray="1 1" fill="none"/><rect x="7" y="1.500" width="6" height="5.500" fill="#fbd070" stroke="#e08a20"/><rect x="7" y="9.500" width="6" height="5.500" fill="#fbd070" stroke="#e08a20"/></svg></div>
<div class="tab" style="left:33px;top:680px;font-weight:bold;letter-spacing:.9px">任务树</div>
<div class="ic" style="left:85px;top:679px"><svg width="16" height="16" viewBox="0 0 16 16" style="display:block;overflow:visible"><rect x=".5" y="1.500" width="15" height="13" fill="#fff" stroke="#454545"/><rect x="1" y="2" width="14" height="2" fill="#8a8a8a"/><path d="M1 5.500h14M1 11h14M1 13h14M4.500 2v12M8 2v12M11.500 2v12" stroke="#8c8c8c" stroke-width=".8"/><rect x="1.500" y="7" width="13" height="2.500" fill="#dfe6ff" stroke="#4a5ae0" stroke-width=".9"/></svg></div>
<div class="tab" style="left:108px">列表视图</div>
<div class="x" style="left:165px">x</div>
<div class="ic" style="left:178px;top:679px"><svg width="16" height="16" viewBox="0 0 16 16" style="display:block;overflow:visible"><path d="M1.500 1v13.500h13.500" stroke="#3a6ac8" stroke-width="1.300" fill="none"/><path d="M2.500 10c2-7 5-8 7-6s3.500 5 5 7" stroke="#e8402a" stroke-width="1.500" fill="none"/><path d="M2.500 13c3 0 5-4 7-4s3 3 5 3.500" stroke="#3ab03a" stroke-width="1.500" fill="none"/><path d="M2.500 3c2 1 3 6 5.500 5.500S11 5 14 5" stroke="#3a7ae0" stroke-width="1.500" fill="none"/></svg></div>
<div class="tab" style="left:200px">图</div>
<div class="x" style="left:222px">x</div>
<div class="ic" style="left:235px;top:679px"><svg width="16" height="16" viewBox="0 0 16 16" style="display:block;overflow:visible"><rect x="1.500" y="2" width="13" height="13.500" fill="#fff" stroke="#7a7a7a"/><rect x="1.500" y="2" width="13" height="3.500" fill="#e03a2a"/><rect x="3.500" y=".3" width="2" height="3.200" rx=".8" fill="#c02a1a"/><rect x="10.500" y=".3" width="2" height="3.200" rx=".8" fill="#c02a1a"/><text x="8" y="13.500" text-anchor="middle" font-family="Liberation Sans,sans-serif" font-size="8" font-weight="bold" fill="#333">31</text></svg></div>
<div class="tab" style="left:259px">日历</div>
<div class="x" style="left:292px">x</div>
<div class="ic" style="left:305px;top:679px"><svg width="16" height="16" viewBox="0 0 16 16" style="display:block;overflow:visible"><rect x=".5" y="1.500" width="15" height="13" fill="#fff" stroke="#5a6aa8"/><rect x="1" y="2" width="14" height="3" fill="#4a6ad0"/><rect x="2.500" y="7" width="4" height="3" fill="#e03a2a"/><rect x="8" y="7" width="5" height="3" fill="#e03a2a"/><rect x="2.500" y="11" width="6" height="2.500" fill="#e03a2a"/></svg></div>
<div class="tab" style="left:329px">周计划</div>
<div class="x" style="left:374px">x</div>
<div class="ic" style="left:387px;top:679px"><svg width="16" height="16" viewBox="0 0 16 16" style="display:block;overflow:visible"><path d="M3.500 7.500c0-6 9-6 9 0z" fill="#222"/><path d="M.3 8.300c0-1.500 15.400-1.500 15.400 0S.3 9.800.3 8.300z" fill="#222"/><rect x="3.500" y="6" width="9" height="1.200" fill="#555"/><ellipse cx="5" cy="11.800" rx="2.600" ry="2" fill="#222"/><ellipse cx="11" cy="11.800" rx="2.600" ry="2" fill="#222"/><path d="M7 11.300h2" stroke="#222" stroke-width="1.200"/></svg></div>
<div class="tab" style="left:410px">证据板</div>
<div class="x" style="left:456px">x</div>
<div class="ic" style="left:467px;top:679px"><svg width="16" height="16" viewBox="0 0 16 16" style="display:block;overflow:visible"><rect x="1" y="2" width="7" height="3.200" fill="#e03a2a"/><rect x="5" y="6.500" width="8" height="3.200" fill="#3a7ae0"/><rect x="8" y="11" width="7" height="3.200" fill="#3ab03a"/><path d="M3 5.200v3h2M9 9.700v3" stroke="#555" stroke-width=".8" fill="none"/></svg></div>
<div class="tab" style="left:493px">甘特图</div>
<div class="x" style="left:538px">x</div>
<div class="ic" style="left:551px;top:679px"><svg width="16" height="16" viewBox="0 0 16 16" style="display:block;overflow:visible"><rect x=".5" y=".5" width="15" height="15" fill="#fff" stroke="#8a8e98"/><rect x="2.5" y="2.5" width="3" height="3" fill="#e03a8a"/><rect x="6.5" y="2.5" width="3" height="3" fill="#3ab03a"/><rect x="10.5" y="2.5" width="3" height="3" fill="#3a7ae0"/><rect x="2.5" y="6.5" width="3" height="3" fill="#3ab03a"/><rect x="6.5" y="6.5" width="3" height="3" fill="#3a7ae0"/><rect x="10.5" y="6.5" width="3" height="3" fill="#e03a8a"/><rect x="2.5" y="10.5" width="3" height="3" fill="#3a7ae0"/><rect x="6.5" y="10.5" width="3" height="3" fill="#e03a8a"/><rect x="10.5" y="10.5" width="3" height="3" fill="#3ab03a"/></svg></div>
<div class="tab" style="left:574px">看板</div>
<div class="x" style="left:608px">x</div>
<div class="ic" style="left:621px;top:679px"><svg width="16" height="16" viewBox="0 0 16 16" style="display:block;overflow:visible"><path d="M6.500 8C3 8 4.500 2 .5 2M6.500 8C3 8 4.500 14 .5 14M6.500 8H.5M9.500 8c3.500 0 2-6 6-6M9.500 8c3.500 0 2 6 6 6M9.500 8h6" stroke="#2a6ad8" stroke-width="1.600" fill="none"/><rect x="5.500" y="4.500" width="5" height="7" fill="#152a80"/></svg></div>
<div class="tab" style="left:645px">思维导图</div>
<div class="x" style="left:702px">x</div>
<div class="a" style="left:716px;top:681px;width:1px;height:7px;background:#e03a30"></div><div class="a" style="left:716px;top:691px;width:1px;height:2px;background:#9ac8f8"></div>
<div class="a" style="left:719px;top:680px;width:16px;height:16px;background:#f0f0f0;border:1px solid #c4c4c4"></div>
<div class="a" style="left:735px;top:680px;width:16px;height:16px;background:#f0f0f0;border:1px solid #c4c4c4"></div>
<svg class="a" style="left:723px;top:684px" width="5" height="7" viewBox="0 0 5 7"><path d="M4.5 0v7L.5 3.5z" fill="#000"/></svg>
<svg class="a" style="left:740px;top:684px" width="5" height="7" viewBox="0 0 5 7"><path d="M.5 0v7l4-3.5z" fill="#000"/></svg>
<div class="a" style="left:757px;top:229px;width:249px;height:220px;background:#fff;border:1px solid #a6a6a6"></div>
<div class="a" style="left:766px;top:234px;font-size:11px;line-height:14px;letter-spacing:0.001px;color:#111">New tasks can be created using:</div>
<div class="a" style="left:766px;top:262px;font-size:11px;line-height:14px;letter-spacing:-0.042px;color:#111">1. The &#x27;New Task&#x27; menu. This gives the greatest</div>
<div class="a" style="left:766px;top:276px;font-size:11px;line-height:14px;letter-spacing:0.05px;color:#111">control over where the task will be created</div>
<div class="a" style="left:766px;top:290px;font-size:11px;line-height:14px;letter-spacing:-0.093px;color:#111">2. The green &#x27;plus&#x27; toolbar buttons</div>
<div class="a" style="left:766px;top:304px;font-size:11px;line-height:14px;letter-spacing:-0.032px;color:#111">3. The context (right-click) menu for the task</div>
<div class="a" style="left:766px;top:318px;font-size:11px;line-height:14px;letter-spacing:-0.167px;color:#111">tree</div>
<div class="a" style="left:766px;top:332px;font-size:11px;line-height:14px;letter-spacing:-0.017px;color:#111">4. The appropriate keyboard shortcuts (default:</div>
<div class="a" style="left:766px;top:346px;font-size:11px;line-height:14px;letter-spacing:-0.246px;color:#111">Ctrl+N, Ctrl+Shift+N)</div>
<div class="a" style="left:766px;top:374px;font-size:11px;line-height:14px;letter-spacing:-0.015px;color:#111">Note: If during the creation of a new task you</div>
<div class="a" style="left:766px;top:388px;font-size:11px;line-height:14px;letter-spacing:0.097px;color:#111">decide that it&#x27;s not what you want (or where</div>
<div class="a" style="left:766px;top:402px;font-size:11px;line-height:14px;letter-spacing:-0.035px;color:#111">you want it) just hit Escape and the task</div>
<div class="a" style="left:766px;top:416px;font-size:11px;line-height:14px;letter-spacing:-0.087px;color:#111">creation will be cancelled.</div>
<div class="a" style="left:871px;top:451px;width:20px;height:2px;background:repeating-linear-gradient(45deg,#8f9db4 0,#8f9db4 1px,#b8c8e0 1px,#b8c8e0 2.500px)"></div>
<div class="ic" style="left:761px;top:460px"><svg width="16" height="16" viewBox="0 0 16 16" style="display:block;overflow:visible"><g fill="#d0d0d0" stroke="#5c5c5c" stroke-width="1"><rect x=".5" y=".5" width="3.500" height="2.500"/><rect x=".5" y="7.500" width="3.500" height="2.500"/></g><path d="M5 1.500h9.500M5.500 3.500h7.500M5.500 5.500h7.500M5 8.500h9.500M5.500 10.500h7.500M5.500 12.500h7.500M5.500 14.500h7.500" stroke="#5c5c5c" stroke-width="1"/></svg></div>
<div class="ic" style="left:782px;top:460px"><svg width="16" height="16" viewBox="0 0 16 16" style="display:block;overflow:visible"><path d="M4.800.5L.8 5.500h2.200v9h3.600v-9h2.200z" fill="#8ccaf8" stroke="#1a7ae0" stroke-width=".8" stroke-linejoin="round"/><path d="M7.500 8.500h2.500v2h2.300v2.200h2.400v2.300H7.500z" fill="#8ccaf8" stroke="#1a7ae0" stroke-width=".8"/><path d="M7.500 10.500h2.500M7.500 12.700h4.800" stroke="#1a7ae0" stroke-width=".7"/></svg></div>
<div class="a" style="left:757px;top:481px;width:249px;height:217px;background:#fff;border:1px solid #74748e"></div>
<div class="ar" style="top:483px;height:20px;overflow:hidden;"><div class="k" style="color:#6d6d6d;">任务ID</div><div class="vl"></div>
<div class="a" style="left:115px;top:0;width:112px;height:19px;background:#f1f1f1"></div>
<div class="v" style="color:#6d6d6d;">1</div>
</div>
<div class="ar" style="top:503px;height:20px;overflow:hidden;"><div class="k" style="">优先级</div><div class="vl"></div>
<div class="v" style=""></div>
<div class="a" style="left:118px;top:3px;width:13px;height:13px;background:#00e040;border:1px solid #0a9a30"></div><div class="v cj" style="left:137px;font-size:12px;letter-spacing:-.45px">1 (非常低)</div>
<div class="btn" style="left:210px;width:17px"><svg class="a" style="left:3px;top:6px" width="9" height="6" viewBox="0 0 9 6"><path d="M.7.8L4.5 4.6 8.3.8" stroke="#444" stroke-width="1.1" fill="none"/></svg></div>
</div>
<div class="ar" style="top:523px;height:20px;overflow:hidden;"><div class="k" style="">估算时间</div><div class="vl"></div>
<div class="v" style="">0.42 D</div>
<div class="btn" style="left:210px;width:17px"><svg class="a" style="left:4px;top:8px" width="9" height="5" viewBox="0 0 9 5"><path d="M0 0h9L4.5 5z" fill="#000"/></svg></div>
</div>
<div class="ar" style="top:543px;height:20px;overflow:hidden;"><div class="k" style="">依赖性</div><div class="vl"></div>
<div class="v" style=""></div>
<div class="btn" style="left:193px;width:17px"><span class="a" style="left:2px;top:3px;width:13px;height:13px"><svg width="13" height="13" viewBox="0 0 13 13" style="display:block;overflow:visible"><circle cx="5.200" cy="5.200" r="3.900" fill="#eef2ee" stroke="#5a625a" stroke-width="1.100"/><path d="M8 8l4 4" stroke="#5a625a" stroke-width="1.800"/></svg></span></div>
<div class="btn" style="left:210px;width:17px;background:#fff"><span class="a" style="left:3px;top:1px;font:bold 11px/14px Liberation Sans;color:#2030a0;letter-spacing:1px">...</span></div>
</div>
<div class="ar" style="top:563px;height:20px;overflow:hidden;"><div class="k" style="">分配到</div><div class="vl"></div>
<div class="v" style=""></div>
<div class="btn" style="left:210px;width:17px;background:#fff"><svg class="a" style="left:3px;top:6px" width="9" height="6" viewBox="0 0 9 6"><path d="M.7.8L4.5 4.6 8.3.8" stroke="#444" stroke-width="1.1" fill="none"/></svg></div>
</div>
<div class="ar" style="top:583px;height:20px;overflow:hidden;"><div class="k" style="">到期日期</div><div class="vl"></div>
<div class="v" style="">2025/1/19</div>
<div class="btn" style="left:193px;width:34px"><span class="a" style="left:6px;top:3px;width:12px;height:13px"><svg width="12" height="13" viewBox="0 0 12 13" style="display:block;overflow:visible"><rect x="1.500" y="1.500" width="10" height="11" fill="#8a8a8a"/><rect x=".5" y=".5" width="10" height="11" rx="1" fill="#f4f4f4" stroke="#6a6a6a" stroke-width=".9"/><path d="M2.500 3.500h6M2.500 5.500h6M2.500 7.500h6M2.500 9.500h6M3.500 2.500v8M5.500 2.500v8M7.500 2.500v8" stroke="#a8a8a8" stroke-width=".7"/></svg></span><svg class="a" style="left:20px;top:7px" width="8" height="5" viewBox="0 0 8 5"><path d="M0 0h8L4 5z" fill="#56678e"/></svg></div>
</div>
<div class="ar" style="top:603px;height:20px;overflow:hidden;"><div class="k" style="">图标</div><div class="vl"></div>
<div class="v" style=""></div>
<div class="a" style="left:118px;top:2px;width:16px;height:16px"><svg width="16" height="16" viewBox="0 0 16 16" style="display:block;overflow:visible"><circle cx="6" cy="5.800" r="4.600" fill="#bcd6ee" stroke="#8fb6dc" stroke-width="1.200"/><circle cx="5.200" cy="4.800" r="2.200" fill="#dcecf8" opacity=".8"/><path d="M9.800 9.600l3.400 3.400" stroke="#c8863c" stroke-width="2.800" stroke-linecap="round"/></svg></div>
<div class="btn" style="left:210px;width:17px"><span class="a" style="left:2px;top:3px;width:13px;height:13px"><svg width="13" height="13" viewBox="0 0 13 13" style="display:block;overflow:visible"><circle cx="6.500" cy="6.500" r="5.800" fill="#fff" stroke="#222" stroke-width="1"/><circle cx="4.500" cy="5" r=".9" fill="#222"/><circle cx="8.500" cy="5" r=".9" fill="#222"/><path d="M3.500 7.800c1.500 2.400 4.500 2.400 6 0" stroke="#222" stroke-width="1" fill="none"/></svg></span></div>
</div>
<div class="ar" style="top:623px;height:20px;overflow:hidden;"><div class="k" style="">完成百分比</div><div class="vl"></div>
<div class="v" style="">0</div>
</div>
<div class="ar" style="top:643px;height:20px;overflow:hidden;"><div class="k" style="">开始日期</div><div class="vl"></div>
<div class="v" style="">2025/1/19</div>
<div class="btn" style="left:193px;width:34px"><span class="a" style="left:6px;top:3px;width:12px;height:13px"><svg width="12" height="13" viewBox="0 0 12 13" style="display:block;overflow:visible"><rect x="1.500" y="1.500" width="10" height="11" fill="#8a8a8a"/><rect x=".5" y=".5" width="10" height="11" rx="1" fill="#f4f4f4" stroke="#6a6a6a" stroke-width=".9"/><path d="M2.500 3.500h6M2.500 5.500h6M2.500 7.500h6M2.500 9.500h6M3.500 2.500v8M5.500 2.500v8M7.500 2.500v8" stroke="#a8a8a8" stroke-width=".7"/></svg></span><svg class="a" style="left:20px;top:7px" width="8" height="5" viewBox="0 0 8 5"><path d="M0 0h8L4 5z" fill="#56678e"/></svg></div>
</div>
<div class="ar" style="top:663px;height:20px;overflow:hidden;"><div class="k" style="">提醒</div><div class="vl"></div>
<div class="v" style=""></div>
<div class="btn" style="left:210px;width:17px"><span class="a" style="left:2px;top:2px;width:13px;height:15px"><svg width="16" height="16" viewBox="0 0 16 16" style="display:block;overflow:visible"><path d="M8 1.500c.7 0 1 .4 1 1 2 .8 2.300 2.600 2.400 4.800.1 2.200.8 3.400 2 4.400H2.600c1.200-1 1.900-2.200 2-4.400C4.700 5.100 5 3.300 7 2.500c0-.6.300-1 1-1z" fill="#fff" stroke="#222" stroke-width="1"/><path d="M6.800 12.500c0 1.600 2.400 1.600 2.400 0" stroke="#222" fill="none"/></svg></span></div>
</div>
<div class="ar" style="top:683px;height:14px;overflow:hidden;border-bottom:none;"><div class="k" style="">文件链接</div><div class="vl"></div>
<div class="v" style=""></div>
<div class="a" style="left:118px;top:4px;width:14px;height:11px"><svg width="14" height="11" viewBox="0 0 14 11" style="display:block;overflow:visible"><rect x=".5" y=".5" width="13" height="10" fill="#fff" stroke="#8e8e8e"/><rect x="2" y="2" width="10" height="7" fill="#4a92f0"/><path d="M2 4.500c2-1.500 4-.5 5.500-.8S10.500 3 12 4v2H2z" fill="#e8f0fa"/><path d="M2 7.500V5.300c1.500-.5 3 .2 4.500 1s3 .7 5.500.2v1z" fill="#4a5a52"/><path d="M2 9V7.500c3-.5 6 .5 10-.5v2z" fill="#6a9ae0"/></svg></div><div class="v" style="left:135px;color:#17173a;font-size:12px">doors.jr</div>
<div class="btn" style="left:174px;width:18px"><span class="a" style="left:2px;top:3px;width:13px;height:13px"><svg width="13" height="13" viewBox="0 0 13 13" style="display:block;overflow:visible"><circle cx="5.200" cy="5.200" r="3.900" fill="#eef2ee" stroke="#5a625a" stroke-width="1.100"/><path d="M8 8l4 4" stroke="#5a625a" stroke-width="1.800"/></svg></span></div>
<div class="btn" style="left:192px;width:18px"><span class="a" style="left:1px;top:3px;width:16px;height:16px"><svg width="16" height="16" viewBox="0 0 16 16" style="display:block;overflow:visible"><defs><linearGradient id="hfg" x1="0" y1="0" x2="1" y2="1"><stop offset=".35" stop-color="#fff"/><stop offset="1" stop-color="#9a9a9a"/></linearGradient></defs><path d="M2 14.500V6l1.500-2.500 4 .5 1.500-2 5 1.500.5 2.500v8.500z" fill="#fff" stroke="#222" stroke-width="1"/><rect x="2" y="7.500" width="12.500" height="7" fill="url(#hfg)" stroke="#222" stroke-width="1"/></svg></span></div>
<div class="btn" style="left:210px;width:17px"><svg class="a" style="left:3px;top:6px" width="9" height="6" viewBox="0 0 9 6"><path d="M.7.8L4.5 4.6 8.3.8" stroke="#444" stroke-width="1.1" fill="none"/></svg></div>
</div>
<div class="a" style="left:987px;top:482px;width:18px;height:215px;background:#f0f0f0"></div>
<div class="a" style="left:988px;top:500px;width:15px;height:94px;background:#cdcdcd"></div>
<svg class="a" style="left:990px;top:488px" width="10" height="7" viewBox="0 0 10 7"><path d="M1 6l4-4 4 4" stroke="#404040" stroke-width="2.100" fill="none"/></svg>
<svg class="a" style="left:990px;top:684px" width="10" height="7" viewBox="0 0 10 7"><path d="M1 1l4 4 4-4" stroke="#404040" stroke-width="2.100" fill="none"/></svg>
<div class="a" style="left:0;top:701px;width:1010px;height:1px;background:#62a4f7"></div>
<div class="a" style="left:0;top:702px;width:1010px;height:20px;background:linear-gradient(#e6f0fe 0,#d9e8fd 2px,#bdd8fc)"></div>
<div class="ic" style="left:5px;top:705px"><svg width="16" height="16" viewBox="0 0 16 16" style="display:block;overflow:visible"><circle cx="6" cy="5.800" r="4.600" fill="#bcd6ee" stroke="#8fb6dc" stroke-width="1.200"/><circle cx="5.200" cy="4.800" r="2.200" fill="#dcecf8" opacity=".8"/><path d="M9.800 9.600l3.400 3.400" stroke="#c8863c" stroke-width="2.800" stroke-linecap="round"/></svg></div>
<div class="sb" style="left:24px;top:706px;letter-spacing:-0.174px">This is a Task<span style="position:absolute;left:73px">(1)</span></div>
<div class="a" style="left:719px;top:705px;width:1px;height:17px;background:#6e7682"></div>
<div class="a" style="left:760px;top:705px;width:1px;height:17px;background:#6e7682"></div>
<div class="a" style="left:836px;top:705px;width:1px;height:17px;background:#6e7682"></div>
<div class="a" style="left:915px;top:705px;width:1px;height:17px;background:#6e7682"></div>
<div class="sb" style="left:724px;top:706px">18 / 18</div>
<div class="sb cj" style="left:763px;top:707px;font-size:12px">估算: 0.42 D</div>
<div class="sb cj" style="left:840px;top:707px;font-size:12px">消耗: 0.00 D</div>
<div class="sb cj" style="left:919px;top:707px;font-size:12px">任务: 任务树</div>
<svg class="a" style="left:995px;top:712px" width="8" height="8" viewBox="0 0 8 8"><g fill="#c6b6a6"><rect x="6" y="0" width="2" height="2"/><rect x="3" y="3" width="2" height="2"/><rect x="6" y="3" width="2" height="2"/><rect x="0" y="6" width="2" height="2"/><rect x="3" y="6" width="2" height="2"/><rect x="6" y="6" width="2" height="2"/></g></svg>
<div class="a" style="left:658px;top:689px;font:bold 24px/30px 'DejaVu Sans',sans-serif;color:#000;-webkit-text-stroke:1.5px #000;transform-origin:0 0;transform:scaleX(1.2189)">misspecos.com</div>
<div class="a" style="left:0;top:0;width:1px;height:723px;background:#0a3a34"></div>
<div class="a" style="left:0;top:0;width:1010px;height:1px;background:#0a3a34"></div>
<div class="a" style="left:1009px;top:0;width:1px;height:723px;background:#0a3a34"></div>
<div class="a" style="left:0;top:722px;width:1010px;height:1px;background:#0a3a34"></div>
</body></html>
